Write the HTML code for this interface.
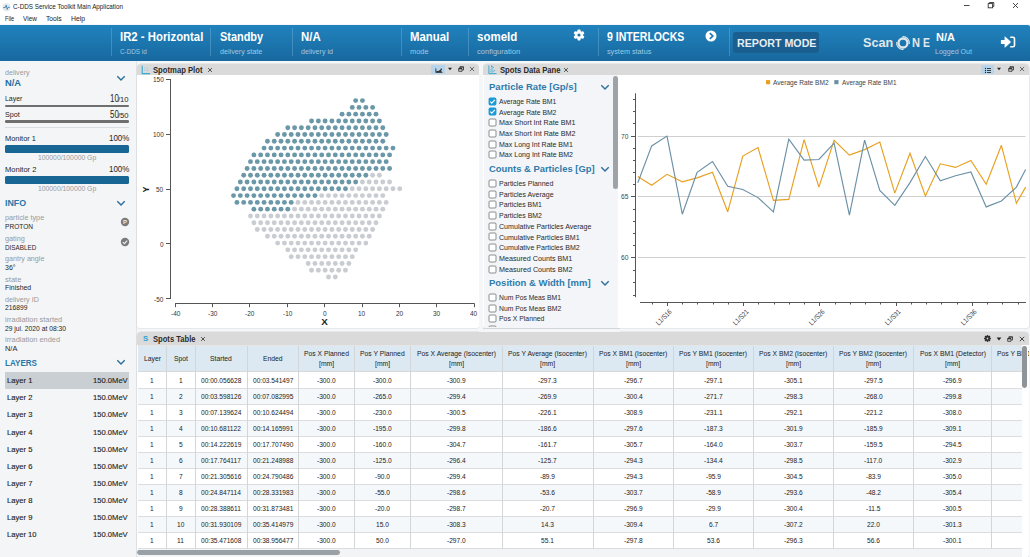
<!DOCTYPE html>
<html><head><meta charset="utf-8"><title>C-DDS Service Toolkit</title>
<style>
html,body{margin:0;padding:0;}
body{width:1030px;height:557px;position:relative;overflow:hidden;background:#f4f6f8;font-family:"Liberation Sans", sans-serif;}
.t{position:absolute;white-space:pre;transform-origin:0 0;z-index:2;}
svg{position:absolute;left:0;top:0;}
</style></head><body>
<div style="position:absolute;left:0.00px;top:0.00px;width:1030.00px;height:24.00px;background:#ffffff;"></div>
<svg width="12" height="12" style="left:1px;top:0.5px" viewBox="0 0 12 12"><circle cx="5.5" cy="6.3" r="4" fill="#e4e8ec"/><path d="M2.2 6.6 L4.2 6.6 L5.2 4.2 L6.2 8.4 L7 6.3 L8.8 6.3" fill="none" stroke="#3a7fb5" stroke-width="0.9"/></svg>
<svg width="1030" height="24" style="left:0;top:0"><g stroke="#333" stroke-width="0.9" fill="none"><line x1="964" y1="5.5" x2="969.5" y2="5.5"/><rect x="988.2" y="3.6" width="4.4" height="4.2"/><path d="M989.4 3.6 V2.5 H993.8 V6.6 H992.6"/><line x1="1013" y1="3" x2="1018" y2="8"/><line x1="1018" y1="3" x2="1013" y2="8"/></g></svg>
<div style="position:absolute;left:0.00px;top:24.50px;width:1029.50px;height:36.10px;background:linear-gradient(#2182bd,#17699f);border-top-right-radius:2px;"></div>
<div style="position:absolute;left:111.30px;top:28.00px;width:1.00px;height:28.00px;background:rgba(140,190,225,0.35);"></div>
<div style="position:absolute;left:210.30px;top:28.00px;width:1.00px;height:28.00px;background:rgba(140,190,225,0.35);"></div>
<div style="position:absolute;left:291.90px;top:28.00px;width:1.00px;height:28.00px;background:rgba(140,190,225,0.35);"></div>
<div style="position:absolute;left:401.20px;top:28.00px;width:1.00px;height:28.00px;background:rgba(140,190,225,0.35);"></div>
<div style="position:absolute;left:468.10px;top:28.00px;width:1.00px;height:28.00px;background:rgba(140,190,225,0.35);"></div>
<div style="position:absolute;left:598.10px;top:28.00px;width:1.00px;height:28.00px;background:rgba(140,190,225,0.35);"></div>
<div style="position:absolute;left:729.20px;top:28.00px;width:1.00px;height:28.00px;background:rgba(140,190,225,0.35);"></div>
<svg width="14" height="14" style="left:572.3px;top:28.1px" viewBox="-7 -7 14 14"><g fill="#fff"><rect x="-1.5" y="-5.5" width="3" height="2.6" rx="0.7" transform="rotate(0)"/><rect x="-1.5" y="-5.5" width="3" height="2.6" rx="0.7" transform="rotate(60)"/><rect x="-1.5" y="-5.5" width="3" height="2.6" rx="0.7" transform="rotate(120)"/><rect x="-1.5" y="-5.5" width="3" height="2.6" rx="0.7" transform="rotate(180)"/><rect x="-1.5" y="-5.5" width="3" height="2.6" rx="0.7" transform="rotate(240)"/><rect x="-1.5" y="-5.5" width="3" height="2.6" rx="0.7" transform="rotate(300)"/><circle r="4.1"/></g><circle r="1.6" fill="#1d77b0"/></svg>
<svg width="12" height="12" style="left:704.6px;top:29.5px" viewBox="0 0 12 12"><circle cx="6" cy="6" r="5.5" fill="#fff"/><path d="M4.8 3.1 L7.8 6 L4.8 8.9" fill="none" stroke="#1d77b0" stroke-width="1.7"/></svg>
<div style="position:absolute;left:733.00px;top:31.80px;width:85.80px;height:21.00px;background:#1a5f8f;border-radius:3px;"></div>
<svg width="18" height="18" style="left:894px;top:34px" viewBox="-9 -9 18 18"><circle cx="0" cy="0" r="4.5" fill="none" stroke="#e2e8ec" stroke-width="2.3"/><path d="M-0.5 -6.4 A6.4 6.4 0 0 1 6.3 1" fill="none" stroke="#e2e8ec" stroke-width="1.1"/><path d="M0.5 6.4 A6.4 6.4 0 0 1 -6.3 -1" fill="none" stroke="#e2e8ec" stroke-width="1.1"/></svg>
<svg width="18" height="14" style="left:1000px;top:35px" viewBox="0 0 18 14"><path d="M0.9 5 H4.6 V1.8 Q4.6 1.3 5.1 1.6 L10.6 6.6 Q10.9 7 10.6 7.4 L5.1 12.4 Q4.6 12.7 4.6 12.2 V9 H0.9 Z" fill="#fff"/><path d="M10.2 2.3 H13 Q14.5 2.3 14.5 3.8 V10.2 Q14.5 11.7 13 11.7 H10.2" fill="none" stroke="#fff" stroke-width="1.6"/></svg>
<div style="position:absolute;left:0.00px;top:60.60px;width:136.00px;height:496.40px;background:#f3f5f7;"></div>
<div style="position:absolute;left:135.50px;top:60.60px;width:1.00px;height:496.40px;background:#e3e5e8;"></div>
<svg width="10" height="7" style="left:116.2px;top:74.5px" viewBox="0 0 10 7"><path d="M1.3 1.3 L5 5 L8.7 1.3" fill="none" stroke="#2a6e9a" stroke-width="1.4"/></svg>
<div style="position:absolute;left:5.00px;top:104.50px;width:124.00px;height:2.50px;background:#6f6f6f;border-radius:1.2px;"></div>
<div style="position:absolute;left:5.00px;top:120.20px;width:124.00px;height:2.60px;background:#6f6f6f;border-radius:1.2px;"></div>
<div style="position:absolute;left:5.00px;top:127.00px;width:124.00px;height:1.00px;background:#d9dce0;"></div>
<div style="position:absolute;left:5.00px;top:144.60px;width:124.00px;height:8.10px;background:#176694;border-radius:1.5px;"></div>
<div style="position:absolute;left:5.00px;top:175.60px;width:124.00px;height:8.10px;background:#176694;border-radius:1.5px;"></div>
<svg width="10" height="7" style="left:116.3px;top:199.5px" viewBox="0 0 10 7"><path d="M1.3 1.3 L5 5 L8.7 1.3" fill="none" stroke="#2a6e9a" stroke-width="1.4"/></svg>
<svg width="10" height="10" style="left:119.9px;top:216.7px" viewBox="0 0 10 10"><circle cx="5" cy="5" r="4.2" fill="#7b7b7b"/><text x="5" y="7.3" font-family="Liberation Sans" font-size="6" font-weight="bold" fill="#e8e8e8" text-anchor="middle">P</text></svg>
<svg width="10" height="10" style="left:119.9px;top:237.1px" viewBox="0 0 10 10"><circle cx="5" cy="5" r="4.2" fill="#7b7b7b"/><path d="M2.8 5.1 L4.4 6.6 L7.2 3.6" fill="none" stroke="#eee" stroke-width="1.2"/></svg>
<svg width="10" height="7" style="left:116.2px;top:359.3px" viewBox="0 0 10 7"><path d="M1.3 1.3 L5 5 L8.7 1.3" fill="none" stroke="#2a6e9a" stroke-width="1.4"/></svg>
<div style="position:absolute;left:5.20px;top:372.30px;width:123.60px;height:16.60px;background:#c9cfd3;"></div>
<div style="position:absolute;left:136.50px;top:60.60px;width:893.50px;height:3.00px;background:#f5f7f9;"></div>
<div style="position:absolute;left:137.00px;top:63.90px;width:341.70px;height:264.30px;background:#ffffff;border-radius:4px 4px 2px 2px;box-shadow:0 0 0 0.5px #d8dadd;overflow:hidden"><div style="position:absolute;left:0;top:0;right:0;height:10.80px;background:#dadada"></div></div>
<div style="position:absolute;left:483.00px;top:63.90px;width:545.50px;height:264.30px;background:#ffffff;border-radius:4px 4px 2px 2px;box-shadow:0 0 0 0.5px #d8dadd;overflow:hidden"><div style="position:absolute;left:0;top:0;right:0;height:10.80px;background:#dadada"></div></div>
<div style="position:absolute;left:137.00px;top:332.20px;width:891.50px;height:224.80px;background:#ffffff;border-radius:4px 4px 2px 2px;box-shadow:0 0 0 0.5px #d8dadd;overflow:hidden"><div style="position:absolute;left:0;top:0;right:0;height:12.50px;background:#dadada"></div></div>
<div style="position:absolute;left:478.70px;top:63.60px;width:4.30px;height:268.60px;background:#f4f6f8;"></div>
<svg width="10" height="10" style="left:140.6px;top:65px" viewBox="0 0 10 10"><path d="M1.2 0.8 V8.6 H9" fill="none" stroke="#39a9d6" stroke-width="1.1"/><path d="M3 3 H4.2 M5.4 3 H6.6 M3 5.2 H4 M5.2 5.2 H7.6" stroke="#8cc6df" stroke-width="0.7"/></svg>
<svg width="8" height="8" style="left:206.20px;top:65.80px" viewBox="-4 -4 8 8"><path d="M-1.9 -1.9 L1.9 1.9 M1.9 -1.9 L-1.9 1.9" stroke="#444" stroke-width="0.9" fill="none"/></svg>
<div style="position:absolute;left:431.10px;top:65.00px;width:13.70px;height:9.00px;background:#b6d4ec;"></div>
<svg width="8" height="6" style="left:446.20px;top:66.40px" viewBox="0 0 8 6"><path d="M2 1.8 H6 L4 4.2 Z" fill="#222"/></svg>
<svg width="8" height="8" style="left:457.40px;top:65.40px" viewBox="0 0 8 8"><g fill="none" stroke="#222" stroke-width="0.75"><path d="M1.7 3.5 H5 V6.3 H1.7 Z"/><path d="M2.9 3.3 V1.8 H6.5 V5 H5.2"/></g><rect x="1.6" y="3.4" width="3.4" height="0.9" fill="#222"/><rect x="2.8" y="1.7" width="3.8" height="0.8" fill="#222"/></svg>
<svg width="8" height="8" style="left:468.40px;top:65.40px" viewBox="-4 -4 8 8"><path d="M-2.1 -2.1 L2.1 2.1 M2.1 -2.1 L-2.1 2.1" stroke="#444" stroke-width="0.75" fill="none"/></svg>
<svg width="10" height="8" style="left:433.5px;top:66px" viewBox="0 0 10 8"><path d="M1.8 2.4 V6.4 H8.4" fill="none" stroke="#333" stroke-width="0.9"/><path d="M2.3 6.2 V4.6 Q4 5.6 5 4.6 Q6 3.6 7.2 3.4 L7.6 6.2 Z" fill="#333"/><circle cx="7.2" cy="3.2" r="0.8" fill="#222"/></svg>
<svg width="1030" height="557" style="left:0;top:0;z-index:1"><line x1="170.5" y1="79" x2="170.5" y2="299" stroke="#555" stroke-width="1"/><line x1="166" y1="79.5" x2="170.5" y2="79.5" stroke="#555" stroke-width="1"/><line x1="166" y1="134.5" x2="170.5" y2="134.5" stroke="#555" stroke-width="1"/><line x1="166" y1="189.5" x2="170.5" y2="189.5" stroke="#555" stroke-width="1"/><line x1="166" y1="243.5" x2="170.5" y2="243.5" stroke="#555" stroke-width="1"/><line x1="166" y1="298.5" x2="170.5" y2="298.5" stroke="#555" stroke-width="1"/><line x1="175" y1="303.5" x2="474.5" y2="303.5" stroke="#555" stroke-width="1"/><line x1="175.5" y1="303.5" x2="175.5" y2="307.2" stroke="#555" stroke-width="1"/><line x1="212.5" y1="303.5" x2="212.5" y2="307.2" stroke="#555" stroke-width="1"/><line x1="249.5" y1="303.5" x2="249.5" y2="307.2" stroke="#555" stroke-width="1"/><line x1="287.5" y1="303.5" x2="287.5" y2="307.2" stroke="#555" stroke-width="1"/><line x1="324.5" y1="303.5" x2="324.5" y2="307.2" stroke="#555" stroke-width="1"/><line x1="362.5" y1="303.5" x2="362.5" y2="307.2" stroke="#555" stroke-width="1"/><line x1="399.5" y1="303.5" x2="399.5" y2="307.2" stroke="#555" stroke-width="1"/><line x1="436.5" y1="303.5" x2="436.5" y2="307.2" stroke="#555" stroke-width="1"/><line x1="474.5" y1="303.5" x2="474.5" y2="307.2" stroke="#555" stroke-width="1"/><circle cx="355.65" cy="100.60" r="2.45" fill="#6b98a8"/><circle cx="362.43" cy="100.60" r="2.45" fill="#6b98a8"/><circle cx="352.26" cy="107.38" r="2.45" fill="#6b98a8"/><circle cx="359.04" cy="107.38" r="2.45" fill="#6b98a8"/><circle cx="365.83" cy="107.38" r="2.45" fill="#6b98a8"/><circle cx="372.61" cy="107.38" r="2.45" fill="#6b98a8"/><circle cx="342.08" cy="114.17" r="2.45" fill="#6b98a8"/><circle cx="348.87" cy="114.17" r="2.45" fill="#6b98a8"/><circle cx="355.65" cy="114.17" r="2.45" fill="#6b98a8"/><circle cx="362.43" cy="114.17" r="2.45" fill="#6b98a8"/><circle cx="369.22" cy="114.17" r="2.45" fill="#6b98a8"/><circle cx="376.00" cy="114.17" r="2.45" fill="#6b98a8"/><circle cx="311.55" cy="120.95" r="2.45" fill="#6b98a8"/><circle cx="318.34" cy="120.95" r="2.45" fill="#6b98a8"/><circle cx="325.12" cy="120.95" r="2.45" fill="#6b98a8"/><circle cx="331.91" cy="120.95" r="2.45" fill="#6b98a8"/><circle cx="338.69" cy="120.95" r="2.45" fill="#6b98a8"/><circle cx="345.47" cy="120.95" r="2.45" fill="#6b98a8"/><circle cx="352.26" cy="120.95" r="2.45" fill="#6b98a8"/><circle cx="359.04" cy="120.95" r="2.45" fill="#6b98a8"/><circle cx="365.83" cy="120.95" r="2.45" fill="#6b98a8"/><circle cx="372.61" cy="120.95" r="2.45" fill="#6b98a8"/><circle cx="379.39" cy="120.95" r="2.45" fill="#6b98a8"/><circle cx="287.81" cy="127.74" r="2.45" fill="#6b98a8"/><circle cx="294.59" cy="127.74" r="2.45" fill="#6b98a8"/><circle cx="301.38" cy="127.74" r="2.45" fill="#6b98a8"/><circle cx="308.16" cy="127.74" r="2.45" fill="#6b98a8"/><circle cx="314.95" cy="127.74" r="2.45" fill="#6b98a8"/><circle cx="321.73" cy="127.74" r="2.45" fill="#6b98a8"/><circle cx="328.51" cy="127.74" r="2.45" fill="#6b98a8"/><circle cx="335.30" cy="127.74" r="2.45" fill="#6b98a8"/><circle cx="342.08" cy="127.74" r="2.45" fill="#6b98a8"/><circle cx="348.87" cy="127.74" r="2.45" fill="#6b98a8"/><circle cx="355.65" cy="127.74" r="2.45" fill="#6b98a8"/><circle cx="362.43" cy="127.74" r="2.45" fill="#6b98a8"/><circle cx="369.22" cy="127.74" r="2.45" fill="#6b98a8"/><circle cx="376.00" cy="127.74" r="2.45" fill="#6b98a8"/><circle cx="382.79" cy="127.74" r="2.45" fill="#6b98a8"/><circle cx="277.63" cy="134.52" r="2.45" fill="#6b98a8"/><circle cx="284.42" cy="134.52" r="2.45" fill="#6b98a8"/><circle cx="291.20" cy="134.52" r="2.45" fill="#6b98a8"/><circle cx="297.99" cy="134.52" r="2.45" fill="#6b98a8"/><circle cx="304.77" cy="134.52" r="2.45" fill="#6b98a8"/><circle cx="311.55" cy="134.52" r="2.45" fill="#6b98a8"/><circle cx="318.34" cy="134.52" r="2.45" fill="#6b98a8"/><circle cx="325.12" cy="134.52" r="2.45" fill="#6b98a8"/><circle cx="331.91" cy="134.52" r="2.45" fill="#6b98a8"/><circle cx="338.69" cy="134.52" r="2.45" fill="#6b98a8"/><circle cx="345.47" cy="134.52" r="2.45" fill="#6b98a8"/><circle cx="352.26" cy="134.52" r="2.45" fill="#6b98a8"/><circle cx="359.04" cy="134.52" r="2.45" fill="#6b98a8"/><circle cx="365.83" cy="134.52" r="2.45" fill="#6b98a8"/><circle cx="372.61" cy="134.52" r="2.45" fill="#6b98a8"/><circle cx="379.39" cy="134.52" r="2.45" fill="#6b98a8"/><circle cx="386.18" cy="134.52" r="2.45" fill="#6b98a8"/><circle cx="267.46" cy="141.31" r="2.45" fill="#6b98a8"/><circle cx="274.24" cy="141.31" r="2.45" fill="#6b98a8"/><circle cx="281.03" cy="141.31" r="2.45" fill="#6b98a8"/><circle cx="287.81" cy="141.31" r="2.45" fill="#6b98a8"/><circle cx="294.59" cy="141.31" r="2.45" fill="#6b98a8"/><circle cx="301.38" cy="141.31" r="2.45" fill="#6b98a8"/><circle cx="308.16" cy="141.31" r="2.45" fill="#6b98a8"/><circle cx="314.95" cy="141.31" r="2.45" fill="#6b98a8"/><circle cx="321.73" cy="141.31" r="2.45" fill="#6b98a8"/><circle cx="328.51" cy="141.31" r="2.45" fill="#6b98a8"/><circle cx="335.30" cy="141.31" r="2.45" fill="#6b98a8"/><circle cx="342.08" cy="141.31" r="2.45" fill="#6b98a8"/><circle cx="348.87" cy="141.31" r="2.45" fill="#6b98a8"/><circle cx="355.65" cy="141.31" r="2.45" fill="#6b98a8"/><circle cx="362.43" cy="141.31" r="2.45" fill="#6b98a8"/><circle cx="369.22" cy="141.31" r="2.45" fill="#6b98a8"/><circle cx="376.00" cy="141.31" r="2.45" fill="#6b98a8"/><circle cx="382.79" cy="141.31" r="2.45" fill="#6b98a8"/><circle cx="264.07" cy="148.09" r="2.45" fill="#6b98a8"/><circle cx="270.85" cy="148.09" r="2.45" fill="#6b98a8"/><circle cx="277.63" cy="148.09" r="2.45" fill="#6b98a8"/><circle cx="284.42" cy="148.09" r="2.45" fill="#6b98a8"/><circle cx="291.20" cy="148.09" r="2.45" fill="#6b98a8"/><circle cx="297.99" cy="148.09" r="2.45" fill="#6b98a8"/><circle cx="304.77" cy="148.09" r="2.45" fill="#6b98a8"/><circle cx="311.55" cy="148.09" r="2.45" fill="#6b98a8"/><circle cx="318.34" cy="148.09" r="2.45" fill="#6b98a8"/><circle cx="325.12" cy="148.09" r="2.45" fill="#6b98a8"/><circle cx="331.91" cy="148.09" r="2.45" fill="#6b98a8"/><circle cx="338.69" cy="148.09" r="2.45" fill="#6b98a8"/><circle cx="345.47" cy="148.09" r="2.45" fill="#6b98a8"/><circle cx="352.26" cy="148.09" r="2.45" fill="#6b98a8"/><circle cx="359.04" cy="148.09" r="2.45" fill="#6b98a8"/><circle cx="365.83" cy="148.09" r="2.45" fill="#6b98a8"/><circle cx="372.61" cy="148.09" r="2.45" fill="#6b98a8"/><circle cx="379.39" cy="148.09" r="2.45" fill="#6b98a8"/><circle cx="386.18" cy="148.09" r="2.45" fill="#6b98a8"/><circle cx="392.96" cy="148.09" r="2.45" fill="#6b98a8"/><circle cx="253.89" cy="154.88" r="2.45" fill="#6b98a8"/><circle cx="260.67" cy="154.88" r="2.45" fill="#6b98a8"/><circle cx="267.46" cy="154.88" r="2.45" fill="#6b98a8"/><circle cx="274.24" cy="154.88" r="2.45" fill="#6b98a8"/><circle cx="281.03" cy="154.88" r="2.45" fill="#6b98a8"/><circle cx="287.81" cy="154.88" r="2.45" fill="#6b98a8"/><circle cx="294.59" cy="154.88" r="2.45" fill="#6b98a8"/><circle cx="301.38" cy="154.88" r="2.45" fill="#6b98a8"/><circle cx="308.16" cy="154.88" r="2.45" fill="#6b98a8"/><circle cx="314.95" cy="154.88" r="2.45" fill="#6b98a8"/><circle cx="321.73" cy="154.88" r="2.45" fill="#6b98a8"/><circle cx="328.51" cy="154.88" r="2.45" fill="#6b98a8"/><circle cx="335.30" cy="154.88" r="2.45" fill="#6b98a8"/><circle cx="342.08" cy="154.88" r="2.45" fill="#6b98a8"/><circle cx="348.87" cy="154.88" r="2.45" fill="#6b98a8"/><circle cx="355.65" cy="154.88" r="2.45" fill="#6b98a8"/><circle cx="362.43" cy="154.88" r="2.45" fill="#6b98a8"/><circle cx="369.22" cy="154.88" r="2.45" fill="#6b98a8"/><circle cx="376.00" cy="154.88" r="2.45" fill="#6b98a8"/><circle cx="382.79" cy="154.88" r="2.45" fill="#6b98a8"/><circle cx="389.57" cy="154.88" r="2.45" fill="#6b98a8"/><circle cx="250.50" cy="161.66" r="2.45" fill="#6b98a8"/><circle cx="257.28" cy="161.66" r="2.45" fill="#6b98a8"/><circle cx="264.07" cy="161.66" r="2.45" fill="#6b98a8"/><circle cx="270.85" cy="161.66" r="2.45" fill="#6b98a8"/><circle cx="277.63" cy="161.66" r="2.45" fill="#6b98a8"/><circle cx="284.42" cy="161.66" r="2.45" fill="#6b98a8"/><circle cx="291.20" cy="161.66" r="2.45" fill="#6b98a8"/><circle cx="297.99" cy="161.66" r="2.45" fill="#6b98a8"/><circle cx="304.77" cy="161.66" r="2.45" fill="#6b98a8"/><circle cx="311.55" cy="161.66" r="2.45" fill="#6b98a8"/><circle cx="318.34" cy="161.66" r="2.45" fill="#6b98a8"/><circle cx="325.12" cy="161.66" r="2.45" fill="#6b98a8"/><circle cx="331.91" cy="161.66" r="2.45" fill="#6b98a8"/><circle cx="338.69" cy="161.66" r="2.45" fill="#6b98a8"/><circle cx="345.47" cy="161.66" r="2.45" fill="#6b98a8"/><circle cx="352.26" cy="161.66" r="2.45" fill="#6b98a8"/><circle cx="359.04" cy="161.66" r="2.45" fill="#6b98a8"/><circle cx="365.83" cy="161.66" r="2.45" fill="#6b98a8"/><circle cx="372.61" cy="161.66" r="2.45" fill="#6b98a8"/><circle cx="379.39" cy="161.66" r="2.45" fill="#6b98a8"/><circle cx="386.18" cy="161.66" r="2.45" fill="#6b98a8"/><circle cx="247.11" cy="168.45" r="2.45" fill="#6b98a8"/><circle cx="253.89" cy="168.45" r="2.45" fill="#6b98a8"/><circle cx="260.67" cy="168.45" r="2.45" fill="#6b98a8"/><circle cx="267.46" cy="168.45" r="2.45" fill="#6b98a8"/><circle cx="274.24" cy="168.45" r="2.45" fill="#6b98a8"/><circle cx="281.03" cy="168.45" r="2.45" fill="#6b98a8"/><circle cx="287.81" cy="168.45" r="2.45" fill="#6b98a8"/><circle cx="294.59" cy="168.45" r="2.45" fill="#6b98a8"/><circle cx="301.38" cy="168.45" r="2.45" fill="#6b98a8"/><circle cx="308.16" cy="168.45" r="2.45" fill="#6b98a8"/><circle cx="314.95" cy="168.45" r="2.45" fill="#6b98a8"/><circle cx="321.73" cy="168.45" r="2.45" fill="#6b98a8"/><circle cx="328.51" cy="168.45" r="2.45" fill="#6b98a8"/><circle cx="335.30" cy="168.45" r="2.45" fill="#6b98a8"/><circle cx="342.08" cy="168.45" r="2.45" fill="#6b98a8"/><circle cx="348.87" cy="168.45" r="2.45" fill="#6b98a8"/><circle cx="355.65" cy="168.45" r="2.45" fill="#6b98a8"/><circle cx="362.43" cy="168.45" r="2.45" fill="#6b98a8"/><circle cx="369.22" cy="168.45" r="2.45" fill="#6b98a8"/><circle cx="376.00" cy="168.45" r="2.45" fill="#6b98a8"/><circle cx="382.79" cy="168.45" r="2.45" fill="#6b98a8"/><circle cx="389.57" cy="168.45" r="2.45" fill="#6b98a8"/><circle cx="243.71" cy="175.24" r="2.45" fill="#6b98a8"/><circle cx="250.50" cy="175.24" r="2.45" fill="#6b98a8"/><circle cx="257.28" cy="175.24" r="2.45" fill="#6b98a8"/><circle cx="264.07" cy="175.24" r="2.45" fill="#6b98a8"/><circle cx="270.85" cy="175.24" r="2.45" fill="#6b98a8"/><circle cx="277.63" cy="175.24" r="2.45" fill="#6b98a8"/><circle cx="284.42" cy="175.24" r="2.45" fill="#6b98a8"/><circle cx="291.20" cy="175.24" r="2.45" fill="#6b98a8"/><circle cx="297.99" cy="175.24" r="2.45" fill="#6b98a8"/><circle cx="304.77" cy="175.24" r="2.45" fill="#6b98a8"/><circle cx="311.55" cy="175.24" r="2.45" fill="#6b98a8"/><circle cx="318.34" cy="175.24" r="2.45" fill="#6b98a8"/><circle cx="325.12" cy="175.24" r="2.45" fill="#6b98a8"/><circle cx="331.91" cy="175.24" r="2.45" fill="#6b98a8"/><circle cx="338.69" cy="175.24" r="2.45" fill="#6b98a8"/><circle cx="345.47" cy="175.24" r="2.45" fill="#6b98a8"/><circle cx="352.26" cy="175.24" r="2.45" fill="#6b98a8"/><circle cx="359.04" cy="175.24" r="2.45" fill="#6b98a8"/><circle cx="365.83" cy="175.24" r="2.45" fill="#6b98a8"/><circle cx="372.61" cy="175.24" r="2.45" fill="#c9ccd1"/><circle cx="379.39" cy="175.24" r="2.45" fill="#c9ccd1"/><circle cx="240.32" cy="182.02" r="2.45" fill="#6b98a8"/><circle cx="247.11" cy="182.02" r="2.45" fill="#6b98a8"/><circle cx="253.89" cy="182.02" r="2.45" fill="#6b98a8"/><circle cx="260.67" cy="182.02" r="2.45" fill="#6b98a8"/><circle cx="267.46" cy="182.02" r="2.45" fill="#6b98a8"/><circle cx="274.24" cy="182.02" r="2.45" fill="#6b98a8"/><circle cx="281.03" cy="182.02" r="2.45" fill="#6b98a8"/><circle cx="287.81" cy="182.02" r="2.45" fill="#6b98a8"/><circle cx="294.59" cy="182.02" r="2.45" fill="#6b98a8"/><circle cx="301.38" cy="182.02" r="2.45" fill="#6b98a8"/><circle cx="308.16" cy="182.02" r="2.45" fill="#6b98a8"/><circle cx="314.95" cy="182.02" r="2.45" fill="#6b98a8"/><circle cx="321.73" cy="182.02" r="2.45" fill="#6b98a8"/><circle cx="328.51" cy="182.02" r="2.45" fill="#6b98a8"/><circle cx="335.30" cy="182.02" r="2.45" fill="#6b98a8"/><circle cx="342.08" cy="182.02" r="2.45" fill="#6b98a8"/><circle cx="348.87" cy="182.02" r="2.45" fill="#6b98a8"/><circle cx="355.65" cy="182.02" r="2.45" fill="#6b98a8"/><circle cx="362.43" cy="182.02" r="2.45" fill="#c9ccd1"/><circle cx="369.22" cy="182.02" r="2.45" fill="#c9ccd1"/><circle cx="376.00" cy="182.02" r="2.45" fill="#c9ccd1"/><circle cx="382.79" cy="182.02" r="2.45" fill="#c9ccd1"/><circle cx="389.57" cy="182.02" r="2.45" fill="#c9ccd1"/><circle cx="236.93" cy="188.81" r="2.45" fill="#6b98a8"/><circle cx="243.71" cy="188.81" r="2.45" fill="#6b98a8"/><circle cx="250.50" cy="188.81" r="2.45" fill="#6b98a8"/><circle cx="257.28" cy="188.81" r="2.45" fill="#6b98a8"/><circle cx="264.07" cy="188.81" r="2.45" fill="#6b98a8"/><circle cx="270.85" cy="188.81" r="2.45" fill="#6b98a8"/><circle cx="277.63" cy="188.81" r="2.45" fill="#6b98a8"/><circle cx="284.42" cy="188.81" r="2.45" fill="#6b98a8"/><circle cx="291.20" cy="188.81" r="2.45" fill="#6b98a8"/><circle cx="297.99" cy="188.81" r="2.45" fill="#6b98a8"/><circle cx="304.77" cy="188.81" r="2.45" fill="#6b98a8"/><circle cx="311.55" cy="188.81" r="2.45" fill="#6b98a8"/><circle cx="318.34" cy="188.81" r="2.45" fill="#6b98a8"/><circle cx="325.12" cy="188.81" r="2.45" fill="#6b98a8"/><circle cx="331.91" cy="188.81" r="2.45" fill="#6b98a8"/><circle cx="338.69" cy="188.81" r="2.45" fill="#6b98a8"/><circle cx="345.47" cy="188.81" r="2.45" fill="#6b98a8"/><circle cx="352.26" cy="188.81" r="2.45" fill="#c9ccd1"/><circle cx="359.04" cy="188.81" r="2.45" fill="#c9ccd1"/><circle cx="365.83" cy="188.81" r="2.45" fill="#c9ccd1"/><circle cx="372.61" cy="188.81" r="2.45" fill="#c9ccd1"/><circle cx="379.39" cy="188.81" r="2.45" fill="#c9ccd1"/><circle cx="386.18" cy="188.81" r="2.45" fill="#c9ccd1"/><circle cx="392.96" cy="188.81" r="2.45" fill="#c9ccd1"/><circle cx="399.75" cy="188.81" r="2.45" fill="#c9ccd1"/><circle cx="233.54" cy="195.59" r="2.45" fill="#6b98a8"/><circle cx="240.32" cy="195.59" r="2.45" fill="#6b98a8"/><circle cx="247.11" cy="195.59" r="2.45" fill="#6b98a8"/><circle cx="253.89" cy="195.59" r="2.45" fill="#6b98a8"/><circle cx="260.67" cy="195.59" r="2.45" fill="#6b98a8"/><circle cx="267.46" cy="195.59" r="2.45" fill="#6b98a8"/><circle cx="274.24" cy="195.59" r="2.45" fill="#6b98a8"/><circle cx="281.03" cy="195.59" r="2.45" fill="#6b98a8"/><circle cx="287.81" cy="195.59" r="2.45" fill="#6b98a8"/><circle cx="294.59" cy="195.59" r="2.45" fill="#6b98a8"/><circle cx="301.38" cy="195.59" r="2.45" fill="#6b98a8"/><circle cx="308.16" cy="195.59" r="2.45" fill="#6b98a8"/><circle cx="314.95" cy="195.59" r="2.45" fill="#6b98a8"/><circle cx="321.73" cy="195.59" r="2.45" fill="#c9ccd1"/><circle cx="328.51" cy="195.59" r="2.45" fill="#c9ccd1"/><circle cx="335.30" cy="195.59" r="2.45" fill="#c9ccd1"/><circle cx="342.08" cy="195.59" r="2.45" fill="#c9ccd1"/><circle cx="348.87" cy="195.59" r="2.45" fill="#c9ccd1"/><circle cx="355.65" cy="195.59" r="2.45" fill="#c9ccd1"/><circle cx="362.43" cy="195.59" r="2.45" fill="#c9ccd1"/><circle cx="369.22" cy="195.59" r="2.45" fill="#c9ccd1"/><circle cx="376.00" cy="195.59" r="2.45" fill="#c9ccd1"/><circle cx="382.79" cy="195.59" r="2.45" fill="#c9ccd1"/><circle cx="236.93" cy="202.38" r="2.45" fill="#6b98a8"/><circle cx="243.71" cy="202.38" r="2.45" fill="#6b98a8"/><circle cx="250.50" cy="202.38" r="2.45" fill="#6b98a8"/><circle cx="257.28" cy="202.38" r="2.45" fill="#6b98a8"/><circle cx="264.07" cy="202.38" r="2.45" fill="#6b98a8"/><circle cx="270.85" cy="202.38" r="2.45" fill="#6b98a8"/><circle cx="277.63" cy="202.38" r="2.45" fill="#6b98a8"/><circle cx="284.42" cy="202.38" r="2.45" fill="#6b98a8"/><circle cx="291.20" cy="202.38" r="2.45" fill="#6b98a8"/><circle cx="297.99" cy="202.38" r="2.45" fill="#c9ccd1"/><circle cx="304.77" cy="202.38" r="2.45" fill="#c9ccd1"/><circle cx="311.55" cy="202.38" r="2.45" fill="#c9ccd1"/><circle cx="318.34" cy="202.38" r="2.45" fill="#c9ccd1"/><circle cx="325.12" cy="202.38" r="2.45" fill="#c9ccd1"/><circle cx="331.91" cy="202.38" r="2.45" fill="#c9ccd1"/><circle cx="338.69" cy="202.38" r="2.45" fill="#c9ccd1"/><circle cx="345.47" cy="202.38" r="2.45" fill="#c9ccd1"/><circle cx="352.26" cy="202.38" r="2.45" fill="#c9ccd1"/><circle cx="359.04" cy="202.38" r="2.45" fill="#c9ccd1"/><circle cx="365.83" cy="202.38" r="2.45" fill="#c9ccd1"/><circle cx="372.61" cy="202.38" r="2.45" fill="#c9ccd1"/><circle cx="379.39" cy="202.38" r="2.45" fill="#c9ccd1"/><circle cx="386.18" cy="202.38" r="2.45" fill="#c9ccd1"/><circle cx="253.89" cy="209.16" r="2.45" fill="#6b98a8"/><circle cx="260.67" cy="209.16" r="2.45" fill="#6b98a8"/><circle cx="267.46" cy="209.16" r="2.45" fill="#6b98a8"/><circle cx="274.24" cy="209.16" r="2.45" fill="#6b98a8"/><circle cx="281.03" cy="209.16" r="2.45" fill="#6b98a8"/><circle cx="287.81" cy="209.16" r="2.45" fill="#6b98a8"/><circle cx="294.59" cy="209.16" r="2.45" fill="#c9ccd1"/><circle cx="301.38" cy="209.16" r="2.45" fill="#c9ccd1"/><circle cx="308.16" cy="209.16" r="2.45" fill="#c9ccd1"/><circle cx="314.95" cy="209.16" r="2.45" fill="#c9ccd1"/><circle cx="321.73" cy="209.16" r="2.45" fill="#c9ccd1"/><circle cx="328.51" cy="209.16" r="2.45" fill="#c9ccd1"/><circle cx="335.30" cy="209.16" r="2.45" fill="#c9ccd1"/><circle cx="342.08" cy="209.16" r="2.45" fill="#c9ccd1"/><circle cx="348.87" cy="209.16" r="2.45" fill="#c9ccd1"/><circle cx="355.65" cy="209.16" r="2.45" fill="#c9ccd1"/><circle cx="362.43" cy="209.16" r="2.45" fill="#c9ccd1"/><circle cx="369.22" cy="209.16" r="2.45" fill="#c9ccd1"/><circle cx="376.00" cy="209.16" r="2.45" fill="#c9ccd1"/><circle cx="382.79" cy="209.16" r="2.45" fill="#c9ccd1"/><circle cx="250.50" cy="215.94" r="2.45" fill="#c9ccd1"/><circle cx="257.28" cy="215.94" r="2.45" fill="#c9ccd1"/><circle cx="264.07" cy="215.94" r="2.45" fill="#c9ccd1"/><circle cx="270.85" cy="215.94" r="2.45" fill="#c9ccd1"/><circle cx="277.63" cy="215.94" r="2.45" fill="#c9ccd1"/><circle cx="284.42" cy="215.94" r="2.45" fill="#c9ccd1"/><circle cx="291.20" cy="215.94" r="2.45" fill="#c9ccd1"/><circle cx="297.99" cy="215.94" r="2.45" fill="#c9ccd1"/><circle cx="304.77" cy="215.94" r="2.45" fill="#c9ccd1"/><circle cx="311.55" cy="215.94" r="2.45" fill="#c9ccd1"/><circle cx="318.34" cy="215.94" r="2.45" fill="#c9ccd1"/><circle cx="325.12" cy="215.94" r="2.45" fill="#c9ccd1"/><circle cx="331.91" cy="215.94" r="2.45" fill="#c9ccd1"/><circle cx="338.69" cy="215.94" r="2.45" fill="#c9ccd1"/><circle cx="345.47" cy="215.94" r="2.45" fill="#c9ccd1"/><circle cx="352.26" cy="215.94" r="2.45" fill="#c9ccd1"/><circle cx="359.04" cy="215.94" r="2.45" fill="#c9ccd1"/><circle cx="365.83" cy="215.94" r="2.45" fill="#c9ccd1"/><circle cx="372.61" cy="215.94" r="2.45" fill="#c9ccd1"/><circle cx="379.39" cy="215.94" r="2.45" fill="#c9ccd1"/><circle cx="253.89" cy="222.73" r="2.45" fill="#c9ccd1"/><circle cx="260.67" cy="222.73" r="2.45" fill="#c9ccd1"/><circle cx="267.46" cy="222.73" r="2.45" fill="#c9ccd1"/><circle cx="274.24" cy="222.73" r="2.45" fill="#c9ccd1"/><circle cx="281.03" cy="222.73" r="2.45" fill="#c9ccd1"/><circle cx="287.81" cy="222.73" r="2.45" fill="#c9ccd1"/><circle cx="294.59" cy="222.73" r="2.45" fill="#c9ccd1"/><circle cx="301.38" cy="222.73" r="2.45" fill="#c9ccd1"/><circle cx="308.16" cy="222.73" r="2.45" fill="#c9ccd1"/><circle cx="314.95" cy="222.73" r="2.45" fill="#c9ccd1"/><circle cx="321.73" cy="222.73" r="2.45" fill="#c9ccd1"/><circle cx="328.51" cy="222.73" r="2.45" fill="#c9ccd1"/><circle cx="335.30" cy="222.73" r="2.45" fill="#c9ccd1"/><circle cx="342.08" cy="222.73" r="2.45" fill="#c9ccd1"/><circle cx="348.87" cy="222.73" r="2.45" fill="#c9ccd1"/><circle cx="355.65" cy="222.73" r="2.45" fill="#c9ccd1"/><circle cx="362.43" cy="222.73" r="2.45" fill="#c9ccd1"/><circle cx="369.22" cy="222.73" r="2.45" fill="#c9ccd1"/><circle cx="376.00" cy="222.73" r="2.45" fill="#c9ccd1"/><circle cx="257.28" cy="229.51" r="2.45" fill="#c9ccd1"/><circle cx="264.07" cy="229.51" r="2.45" fill="#c9ccd1"/><circle cx="270.85" cy="229.51" r="2.45" fill="#c9ccd1"/><circle cx="277.63" cy="229.51" r="2.45" fill="#c9ccd1"/><circle cx="284.42" cy="229.51" r="2.45" fill="#c9ccd1"/><circle cx="291.20" cy="229.51" r="2.45" fill="#c9ccd1"/><circle cx="297.99" cy="229.51" r="2.45" fill="#c9ccd1"/><circle cx="304.77" cy="229.51" r="2.45" fill="#c9ccd1"/><circle cx="311.55" cy="229.51" r="2.45" fill="#c9ccd1"/><circle cx="318.34" cy="229.51" r="2.45" fill="#c9ccd1"/><circle cx="325.12" cy="229.51" r="2.45" fill="#c9ccd1"/><circle cx="331.91" cy="229.51" r="2.45" fill="#c9ccd1"/><circle cx="338.69" cy="229.51" r="2.45" fill="#c9ccd1"/><circle cx="345.47" cy="229.51" r="2.45" fill="#c9ccd1"/><circle cx="352.26" cy="229.51" r="2.45" fill="#c9ccd1"/><circle cx="359.04" cy="229.51" r="2.45" fill="#c9ccd1"/><circle cx="365.83" cy="229.51" r="2.45" fill="#c9ccd1"/><circle cx="372.61" cy="229.51" r="2.45" fill="#c9ccd1"/><circle cx="267.46" cy="236.30" r="2.45" fill="#c9ccd1"/><circle cx="274.24" cy="236.30" r="2.45" fill="#c9ccd1"/><circle cx="281.03" cy="236.30" r="2.45" fill="#c9ccd1"/><circle cx="287.81" cy="236.30" r="2.45" fill="#c9ccd1"/><circle cx="294.59" cy="236.30" r="2.45" fill="#c9ccd1"/><circle cx="301.38" cy="236.30" r="2.45" fill="#c9ccd1"/><circle cx="308.16" cy="236.30" r="2.45" fill="#c9ccd1"/><circle cx="314.95" cy="236.30" r="2.45" fill="#c9ccd1"/><circle cx="321.73" cy="236.30" r="2.45" fill="#c9ccd1"/><circle cx="328.51" cy="236.30" r="2.45" fill="#c9ccd1"/><circle cx="335.30" cy="236.30" r="2.45" fill="#c9ccd1"/><circle cx="342.08" cy="236.30" r="2.45" fill="#c9ccd1"/><circle cx="348.87" cy="236.30" r="2.45" fill="#c9ccd1"/><circle cx="355.65" cy="236.30" r="2.45" fill="#c9ccd1"/><circle cx="362.43" cy="236.30" r="2.45" fill="#c9ccd1"/><circle cx="369.22" cy="236.30" r="2.45" fill="#c9ccd1"/><circle cx="277.63" cy="243.09" r="2.45" fill="#c9ccd1"/><circle cx="284.42" cy="243.09" r="2.45" fill="#c9ccd1"/><circle cx="291.20" cy="243.09" r="2.45" fill="#c9ccd1"/><circle cx="297.99" cy="243.09" r="2.45" fill="#c9ccd1"/><circle cx="304.77" cy="243.09" r="2.45" fill="#c9ccd1"/><circle cx="311.55" cy="243.09" r="2.45" fill="#c9ccd1"/><circle cx="318.34" cy="243.09" r="2.45" fill="#c9ccd1"/><circle cx="325.12" cy="243.09" r="2.45" fill="#c9ccd1"/><circle cx="331.91" cy="243.09" r="2.45" fill="#c9ccd1"/><circle cx="338.69" cy="243.09" r="2.45" fill="#c9ccd1"/><circle cx="345.47" cy="243.09" r="2.45" fill="#c9ccd1"/><circle cx="352.26" cy="243.09" r="2.45" fill="#c9ccd1"/><circle cx="359.04" cy="243.09" r="2.45" fill="#c9ccd1"/><circle cx="365.83" cy="243.09" r="2.45" fill="#c9ccd1"/><circle cx="287.81" cy="249.87" r="2.45" fill="#c9ccd1"/><circle cx="294.59" cy="249.87" r="2.45" fill="#c9ccd1"/><circle cx="301.38" cy="249.87" r="2.45" fill="#c9ccd1"/><circle cx="308.16" cy="249.87" r="2.45" fill="#c9ccd1"/><circle cx="314.95" cy="249.87" r="2.45" fill="#c9ccd1"/><circle cx="321.73" cy="249.87" r="2.45" fill="#c9ccd1"/><circle cx="328.51" cy="249.87" r="2.45" fill="#c9ccd1"/><circle cx="335.30" cy="249.87" r="2.45" fill="#c9ccd1"/><circle cx="342.08" cy="249.87" r="2.45" fill="#c9ccd1"/><circle cx="348.87" cy="249.87" r="2.45" fill="#c9ccd1"/><circle cx="355.65" cy="249.87" r="2.45" fill="#c9ccd1"/><circle cx="291.20" cy="256.65" r="2.45" fill="#c9ccd1"/><circle cx="297.99" cy="256.65" r="2.45" fill="#c9ccd1"/><circle cx="304.77" cy="256.65" r="2.45" fill="#c9ccd1"/><circle cx="311.55" cy="256.65" r="2.45" fill="#c9ccd1"/><circle cx="318.34" cy="256.65" r="2.45" fill="#c9ccd1"/><circle cx="325.12" cy="256.65" r="2.45" fill="#c9ccd1"/><circle cx="331.91" cy="256.65" r="2.45" fill="#c9ccd1"/><circle cx="338.69" cy="256.65" r="2.45" fill="#c9ccd1"/><circle cx="345.47" cy="256.65" r="2.45" fill="#c9ccd1"/><circle cx="352.26" cy="256.65" r="2.45" fill="#c9ccd1"/><circle cx="308.16" cy="263.44" r="2.45" fill="#c9ccd1"/><circle cx="314.95" cy="263.44" r="2.45" fill="#c9ccd1"/><circle cx="321.73" cy="263.44" r="2.45" fill="#c9ccd1"/><circle cx="328.51" cy="263.44" r="2.45" fill="#c9ccd1"/><circle cx="335.30" cy="263.44" r="2.45" fill="#c9ccd1"/><circle cx="342.08" cy="263.44" r="2.45" fill="#c9ccd1"/><circle cx="348.87" cy="263.44" r="2.45" fill="#c9ccd1"/><circle cx="311.55" cy="270.23" r="2.45" fill="#c9ccd1"/><circle cx="318.34" cy="270.23" r="2.45" fill="#c9ccd1"/><circle cx="325.12" cy="270.23" r="2.45" fill="#c9ccd1"/><circle cx="331.91" cy="270.23" r="2.45" fill="#c9ccd1"/><circle cx="338.69" cy="270.23" r="2.45" fill="#c9ccd1"/><circle cx="345.47" cy="270.23" r="2.45" fill="#c9ccd1"/><circle cx="328.51" cy="277.01" r="2.45" fill="#c9ccd1"/><circle cx="335.30" cy="277.01" r="2.45" fill="#c9ccd1"/></svg>
<div class="t" style="left:141.5px;top:184.5px;font-size:9px;line-height:9px;font-weight:bold;color:#1a1a1a;transform:rotate(-90deg);transform-origin:50% 50%;width:8px;text-align:center">Y</div>
<svg width="9" height="9.9" style="left:487.6px;top:65.2px" viewBox="0 0 10 11"><path d="M1 0.6 V9.6 H9.4" fill="none" stroke="#39a9d6" stroke-width="1.1"/><path d="M2.6 8 L5.4 5 M2.6 5.6 L6.6 2.2 M4 8.4 L8 5.6" stroke="#39a9d6" stroke-width="0.9"/><circle cx="4.2" cy="1.6" r="1" fill="#39a9d6"/></svg>
<svg width="8" height="8" style="left:562.30px;top:65.80px" viewBox="-4 -4 8 8"><path d="M-1.9 -1.9 L1.9 1.9 M1.9 -1.9 L-1.9 1.9" stroke="#444" stroke-width="0.9" fill="none"/></svg>
<div style="position:absolute;left:981.00px;top:65.00px;width:13.00px;height:9.00px;background:#b6d4ec;"></div>
<svg width="8" height="6" style="left:995.40px;top:66.40px" viewBox="0 0 8 6"><path d="M2 1.8 H6 L4 4.2 Z" fill="#222"/></svg>
<svg width="8" height="8" style="left:1006.50px;top:65.40px" viewBox="0 0 8 8"><g fill="none" stroke="#222" stroke-width="0.75"><path d="M1.7 3.5 H5 V6.3 H1.7 Z"/><path d="M2.9 3.3 V1.8 H6.5 V5 H5.2"/></g><rect x="1.6" y="3.4" width="3.4" height="0.9" fill="#222"/><rect x="2.8" y="1.7" width="3.8" height="0.8" fill="#222"/></svg>
<svg width="8" height="8" style="left:1017.80px;top:65.40px" viewBox="-4 -4 8 8"><path d="M-2.1 -2.1 L2.1 2.1 M2.1 -2.1 L-2.1 2.1" stroke="#444" stroke-width="0.75" fill="none"/></svg>
<svg width="10" height="8" style="left:983px;top:66px" viewBox="0 0 10 8"><g fill="#222"><circle cx="2.5" cy="2.4" r="0.65"/><circle cx="2.5" cy="4.5" r="0.65"/><circle cx="2.5" cy="6.4" r="0.65"/><rect x="4" y="2" width="4" height="0.85"/><rect x="4" y="4.05" width="4" height="0.85"/><rect x="4" y="6" width="4" height="0.85"/></g></svg>
<div style="position:absolute;left:483.60px;top:74.60px;width:134.40px;height:253.60px;background:#f3f5f8;"></div>
<div style="position:absolute;left:612.60px;top:76.30px;width:5.40px;height:112.70px;background:#9ea3a8;border-radius:2.7px;"></div>
<svg width="10" height="7" style="left:599.8px;top:83.6px" viewBox="0 0 10 7"><path d="M1.3 1.3 L5 5 L8.7 1.3" fill="none" stroke="#2a6e9a" stroke-width="1.4"/></svg>
<svg width="9" height="9" style="left:487.6px;top:96.80px" viewBox="0 0 9 9"><rect x="0.6" y="0.6" width="7.8" height="7.8" rx="1.6" fill="#1b9ad5"/><path d="M2.3 4.6 L3.8 6.1 L6.8 2.9" fill="none" stroke="#fff" stroke-width="1.1"/></svg>
<svg width="9" height="9" style="left:487.6px;top:107.48px" viewBox="0 0 9 9"><rect x="0.6" y="0.6" width="7.8" height="7.8" rx="1.6" fill="#1b9ad5"/><path d="M2.3 4.6 L3.8 6.1 L6.8 2.9" fill="none" stroke="#fff" stroke-width="1.1"/></svg>
<svg width="9" height="9" style="left:487.6px;top:118.16px" viewBox="0 0 9 9"><rect x="1" y="1" width="7" height="7" rx="1" fill="#fff" stroke="#6a6a6a" stroke-width="0.75"/></svg>
<svg width="9" height="9" style="left:487.6px;top:128.84px" viewBox="0 0 9 9"><rect x="1" y="1" width="7" height="7" rx="1" fill="#fff" stroke="#6a6a6a" stroke-width="0.75"/></svg>
<svg width="9" height="9" style="left:487.6px;top:139.52px" viewBox="0 0 9 9"><rect x="1" y="1" width="7" height="7" rx="1" fill="#fff" stroke="#6a6a6a" stroke-width="0.75"/></svg>
<svg width="9" height="9" style="left:487.6px;top:150.20px" viewBox="0 0 9 9"><rect x="1" y="1" width="7" height="7" rx="1" fill="#fff" stroke="#6a6a6a" stroke-width="0.75"/></svg>
<svg width="10" height="7" style="left:599.8px;top:165.9px" viewBox="0 0 10 7"><path d="M1.3 1.3 L5 5 L8.7 1.3" fill="none" stroke="#2a6e9a" stroke-width="1.4"/></svg>
<svg width="9" height="9" style="left:487.6px;top:178.90px" viewBox="0 0 9 9"><rect x="1" y="1" width="7" height="7" rx="1" fill="#fff" stroke="#6a6a6a" stroke-width="0.75"/></svg>
<svg width="9" height="9" style="left:487.6px;top:189.60px" viewBox="0 0 9 9"><rect x="1" y="1" width="7" height="7" rx="1" fill="#fff" stroke="#6a6a6a" stroke-width="0.75"/></svg>
<svg width="9" height="9" style="left:487.6px;top:200.30px" viewBox="0 0 9 9"><rect x="1" y="1" width="7" height="7" rx="1" fill="#fff" stroke="#6a6a6a" stroke-width="0.75"/></svg>
<svg width="9" height="9" style="left:487.6px;top:211.00px" viewBox="0 0 9 9"><rect x="1" y="1" width="7" height="7" rx="1" fill="#fff" stroke="#6a6a6a" stroke-width="0.75"/></svg>
<svg width="9" height="9" style="left:487.6px;top:221.70px" viewBox="0 0 9 9"><rect x="1" y="1" width="7" height="7" rx="1" fill="#fff" stroke="#6a6a6a" stroke-width="0.75"/></svg>
<svg width="9" height="9" style="left:487.6px;top:232.40px" viewBox="0 0 9 9"><rect x="1" y="1" width="7" height="7" rx="1" fill="#fff" stroke="#6a6a6a" stroke-width="0.75"/></svg>
<svg width="9" height="9" style="left:487.6px;top:243.10px" viewBox="0 0 9 9"><rect x="1" y="1" width="7" height="7" rx="1" fill="#fff" stroke="#6a6a6a" stroke-width="0.75"/></svg>
<svg width="9" height="9" style="left:487.6px;top:253.80px" viewBox="0 0 9 9"><rect x="1" y="1" width="7" height="7" rx="1" fill="#fff" stroke="#6a6a6a" stroke-width="0.75"/></svg>
<svg width="9" height="9" style="left:487.6px;top:264.50px" viewBox="0 0 9 9"><rect x="1" y="1" width="7" height="7" rx="1" fill="#fff" stroke="#6a6a6a" stroke-width="0.75"/></svg>
<svg width="10" height="7" style="left:599.8px;top:279.9px" viewBox="0 0 10 7"><path d="M1.3 1.3 L5 5 L8.7 1.3" fill="none" stroke="#2a6e9a" stroke-width="1.4"/></svg>
<svg width="9" height="9" style="left:487.6px;top:292.90px" viewBox="0 0 9 9"><rect x="1" y="1" width="7" height="7" rx="1" fill="#fff" stroke="#6a6a6a" stroke-width="0.75"/></svg>
<svg width="9" height="9" style="left:487.6px;top:303.58px" viewBox="0 0 9 9"><rect x="1" y="1" width="7" height="7" rx="1" fill="#fff" stroke="#6a6a6a" stroke-width="0.75"/></svg>
<svg width="9" height="9" style="left:487.6px;top:314.26px" viewBox="0 0 9 9"><rect x="1" y="1" width="7" height="7" rx="1" fill="#fff" stroke="#6a6a6a" stroke-width="0.75"/></svg>
<svg width="9" height="9" style="left:487.6px;top:324.94px" viewBox="0 0 9 9"><rect x="1" y="1" width="7" height="7" rx="1" fill="#fff" stroke="#6a6a6a" stroke-width="0.75"/></svg>
<div style="position:absolute;left:483.60px;top:327.20px;width:134.40px;height:1.00px;background:#f3f5f8;z-index:3;"></div>
<div style="position:absolute;left:483.00px;top:328.20px;width:137.00px;height:4.00px;background:#f4f6f8;z-index:3;"></div>
<div style="position:absolute;left:483.00px;top:332.20px;width:137.00px;height:12.40px;background:#dadada;z-index:3;"></div>
<div style="position:absolute;left:483.00px;top:328.20px;width:137.00px;height:0.60px;background:#d3d5d8;z-index:3;"></div>
<svg width="1030" height="557" style="left:0;top:0;z-index:1"><defs><clipPath id="cc"><rect x="637.8" y="80" width="388" height="220"/></clipPath></defs><line x1="637.8" y1="136.5" x2="1025.5" y2="136.5" stroke="#cfcfcf" stroke-width="1"/><line x1="637.8" y1="196.5" x2="1025.5" y2="196.5" stroke="#cfcfcf" stroke-width="1"/><line x1="637.8" y1="257.5" x2="1025.5" y2="257.5" stroke="#cfcfcf" stroke-width="1"/><line x1="635.5" y1="93.3" x2="635.5" y2="297.2" stroke="#555" stroke-width="1"/><line x1="633" y1="99.5" x2="635.5" y2="99.5" stroke="#555" stroke-width="1"/><line x1="633" y1="111.5" x2="635.5" y2="111.5" stroke="#555" stroke-width="1"/><line x1="633" y1="123.5" x2="635.5" y2="123.5" stroke="#555" stroke-width="1"/><line x1="631" y1="136.5" x2="635.5" y2="136.5" stroke="#555" stroke-width="1"/><line x1="633" y1="148.5" x2="635.5" y2="148.5" stroke="#555" stroke-width="1"/><line x1="633" y1="160.5" x2="635.5" y2="160.5" stroke="#555" stroke-width="1"/><line x1="633" y1="172.5" x2="635.5" y2="172.5" stroke="#555" stroke-width="1"/><line x1="633" y1="184.5" x2="635.5" y2="184.5" stroke="#555" stroke-width="1"/><line x1="631" y1="196.5" x2="635.5" y2="196.5" stroke="#555" stroke-width="1"/><line x1="633" y1="209.5" x2="635.5" y2="209.5" stroke="#555" stroke-width="1"/><line x1="633" y1="221.5" x2="635.5" y2="221.5" stroke="#555" stroke-width="1"/><line x1="633" y1="233.5" x2="635.5" y2="233.5" stroke="#555" stroke-width="1"/><line x1="633" y1="245.5" x2="635.5" y2="245.5" stroke="#555" stroke-width="1"/><line x1="631" y1="257.5" x2="635.5" y2="257.5" stroke="#555" stroke-width="1"/><line x1="633" y1="270.5" x2="635.5" y2="270.5" stroke="#555" stroke-width="1"/><line x1="633" y1="282.5" x2="635.5" y2="282.5" stroke="#555" stroke-width="1"/><line x1="633" y1="295.5" x2="635.5" y2="295.5" stroke="#555" stroke-width="1"/><line x1="640" y1="302.5" x2="1026" y2="302.5" stroke="#555" stroke-width="1"/><line x1="652.5" y1="302.5" x2="652.5" y2="304.5" stroke="#555" stroke-width="1"/><line x1="667.5" y1="302.5" x2="667.5" y2="306" stroke="#555" stroke-width="1"/><line x1="682.5" y1="302.5" x2="682.5" y2="304.5" stroke="#555" stroke-width="1"/><line x1="697.5" y1="302.5" x2="697.5" y2="304.5" stroke="#555" stroke-width="1"/><line x1="713.5" y1="302.5" x2="713.5" y2="304.5" stroke="#555" stroke-width="1"/><line x1="728.5" y1="302.5" x2="728.5" y2="304.5" stroke="#555" stroke-width="1"/><line x1="743.5" y1="302.5" x2="743.5" y2="306" stroke="#555" stroke-width="1"/><line x1="758.5" y1="302.5" x2="758.5" y2="304.5" stroke="#555" stroke-width="1"/><line x1="774.5" y1="302.5" x2="774.5" y2="304.5" stroke="#555" stroke-width="1"/><line x1="789.5" y1="302.5" x2="789.5" y2="304.5" stroke="#555" stroke-width="1"/><line x1="804.5" y1="302.5" x2="804.5" y2="304.5" stroke="#555" stroke-width="1"/><line x1="819.5" y1="302.5" x2="819.5" y2="306" stroke="#555" stroke-width="1"/><line x1="835.5" y1="302.5" x2="835.5" y2="304.5" stroke="#555" stroke-width="1"/><line x1="850.5" y1="302.5" x2="850.5" y2="304.5" stroke="#555" stroke-width="1"/><line x1="865.5" y1="302.5" x2="865.5" y2="304.5" stroke="#555" stroke-width="1"/><line x1="880.5" y1="302.5" x2="880.5" y2="304.5" stroke="#555" stroke-width="1"/><line x1="896.5" y1="302.5" x2="896.5" y2="306" stroke="#555" stroke-width="1"/><line x1="911.5" y1="302.5" x2="911.5" y2="304.5" stroke="#555" stroke-width="1"/><line x1="926.5" y1="302.5" x2="926.5" y2="304.5" stroke="#555" stroke-width="1"/><line x1="941.5" y1="302.5" x2="941.5" y2="304.5" stroke="#555" stroke-width="1"/><line x1="957.5" y1="302.5" x2="957.5" y2="304.5" stroke="#555" stroke-width="1"/><line x1="972.5" y1="302.5" x2="972.5" y2="306" stroke="#555" stroke-width="1"/><line x1="987.5" y1="302.5" x2="987.5" y2="304.5" stroke="#555" stroke-width="1"/><line x1="1002.5" y1="302.5" x2="1002.5" y2="304.5" stroke="#555" stroke-width="1"/><line x1="1018.5" y1="302.5" x2="1018.5" y2="304.5" stroke="#555" stroke-width="1"/><polyline points="637.8,176.6 651.7,185.2 667.0,174.3 682.3,181.8 697.1,177.9 712.5,172.3 727.7,211.8 742.8,156.1 758.0,147.6 773.4,200.4 788.8,199.4 804.1,139.7 818.9,187.1 834.1,140.3 849.4,155.1 864.6,149.6 879.8,142.1 894.8,193.1 910.0,153.2 925.4,196.0 940.3,163.8 955.5,167.4 970.9,160.5 986.2,184.2 1001.4,145.3 1016.4,203.3 1025.6,187.1" fill="none" stroke="#e8a020" stroke-width="1.15" stroke-linejoin="miter" stroke-miterlimit="3"/><polyline points="637.8,182.7 651.7,145.9 667.0,136.1 682.3,214.2 697.1,172.3 712.5,161.5 727.7,186.2 742.8,189.5 758.0,197.6 773.4,211.8 788.8,139.2 804.1,160.1 818.9,159.5 834.1,143.1 849.4,215.2 864.6,140.1 879.8,190.5 894.8,205.3 910.0,182.6 925.4,156.5 940.3,180.8 955.5,175.7 970.9,171.9 986.2,206.9 1001.4,201.0 1016.4,187.1 1025.6,169.4" fill="none" stroke="#6b90a6" stroke-width="1.15" stroke-linejoin="miter" stroke-miterlimit="3"/><rect x="766" y="80.1" width="4.2" height="4.1" fill="#e8a020"/><rect x="834.3" y="80.1" width="4.2" height="4.1" fill="#6b90a6"/></svg>
<div class="t" style="left:638.40px;top:308.20px;width:30px;text-align:right;font-size:7px;line-height:7px;color:#333;transform:rotate(-45deg) scaleX(0.86);transform-origin:100% 0">L1/S16</div>
<div class="t" style="left:714.65px;top:308.20px;width:30px;text-align:right;font-size:7px;line-height:7px;color:#333;transform:rotate(-45deg) scaleX(0.86);transform-origin:100% 0">L1/S21</div>
<div class="t" style="left:790.90px;top:308.20px;width:30px;text-align:right;font-size:7px;line-height:7px;color:#333;transform:rotate(-45deg) scaleX(0.86);transform-origin:100% 0">L1/S26</div>
<div class="t" style="left:867.15px;top:308.20px;width:30px;text-align:right;font-size:7px;line-height:7px;color:#333;transform:rotate(-45deg) scaleX(0.86);transform-origin:100% 0">L1/S31</div>
<div class="t" style="left:943.40px;top:308.20px;width:30px;text-align:right;font-size:7px;line-height:7px;color:#333;transform:rotate(-45deg) scaleX(0.86);transform-origin:100% 0">L1/S36</div>
<svg width="8" height="8" style="left:198.50px;top:334.80px" viewBox="-4 -4 8 8"><path d="M-1.9 -1.9 L1.9 1.9 M1.9 -1.9 L-1.9 1.9" stroke="#444" stroke-width="0.9" fill="none"/></svg>
<svg width="9" height="9" style="left:982.8px;top:334.3px" viewBox="-4.5 -4.5 9 9"><g fill="#222"><rect x="-0.75" y="-3.4" width="1.5" height="1.5" transform="rotate(0)"/><rect x="-0.75" y="-3.4" width="1.5" height="1.5" transform="rotate(45)"/><rect x="-0.75" y="-3.4" width="1.5" height="1.5" transform="rotate(90)"/><rect x="-0.75" y="-3.4" width="1.5" height="1.5" transform="rotate(135)"/><rect x="-0.75" y="-3.4" width="1.5" height="1.5" transform="rotate(180)"/><rect x="-0.75" y="-3.4" width="1.5" height="1.5" transform="rotate(225)"/><rect x="-0.75" y="-3.4" width="1.5" height="1.5" transform="rotate(270)"/><rect x="-0.75" y="-3.4" width="1.5" height="1.5" transform="rotate(315)"/><circle r="2.4"/></g><circle r="0.9" fill="#dadada"/></svg>
<svg width="8" height="6" style="left:995.2px;top:335.7px" viewBox="0 0 8 6"><path d="M1.6 1.6 H6.4 L4 4.4 Z" fill="#222"/></svg>
<svg width="8" height="8" style="left:1006.40px;top:334.70px" viewBox="0 0 8 8"><g fill="none" stroke="#222" stroke-width="0.75"><path d="M1.7 3.5 H5 V6.3 H1.7 Z"/><path d="M2.9 3.3 V1.8 H6.5 V5 H5.2"/></g><rect x="1.6" y="3.4" width="3.4" height="0.9" fill="#222"/><rect x="2.8" y="1.7" width="3.8" height="0.8" fill="#222"/></svg>
<svg width="8" height="8" style="left:1017.80px;top:334.70px" viewBox="-4 -4 8 8"><path d="M-2.2 -2.2 L2.2 2.2 M2.2 -2.2 L-2.2 2.2" stroke="#333" stroke-width="0.9" fill="none"/></svg>
<div style="position:absolute;left:137.60px;top:344.80px;width:884.20px;height:0.70px;background:#e6e6e6;"></div>
<div style="position:absolute;left:137.60px;top:345.50px;width:884.20px;height:25.80px;background:#dce8f2;"></div>
<div style="position:absolute;left:137.60px;top:371.00px;width:884.20px;height:1.00px;background:#d6d8da;"></div>
<div style="position:absolute;left:137.60px;top:372.00px;width:884.20px;height:16.00px;background:#ffffff;"></div>
<div style="position:absolute;left:137.60px;top:388.00px;width:884.20px;height:16.00px;background:#f4f8fb;"></div>
<div style="position:absolute;left:137.60px;top:404.00px;width:884.20px;height:16.00px;background:#ffffff;"></div>
<div style="position:absolute;left:137.60px;top:420.00px;width:884.20px;height:16.00px;background:#f4f8fb;"></div>
<div style="position:absolute;left:137.60px;top:436.00px;width:884.20px;height:16.00px;background:#ffffff;"></div>
<div style="position:absolute;left:137.60px;top:452.00px;width:884.20px;height:16.00px;background:#f4f8fb;"></div>
<div style="position:absolute;left:137.60px;top:468.00px;width:884.20px;height:16.00px;background:#ffffff;"></div>
<div style="position:absolute;left:137.60px;top:484.00px;width:884.20px;height:16.00px;background:#f4f8fb;"></div>
<div style="position:absolute;left:137.60px;top:500.00px;width:884.20px;height:16.00px;background:#ffffff;"></div>
<div style="position:absolute;left:137.60px;top:516.00px;width:884.20px;height:16.00px;background:#f4f8fb;"></div>
<div style="position:absolute;left:137.60px;top:532.00px;width:884.20px;height:16.00px;background:#ffffff;"></div>
<div style="position:absolute;left:137.60px;top:388.00px;width:884.20px;height:1.00px;background:#dcdde0;"></div>
<div style="position:absolute;left:137.60px;top:404.00px;width:884.20px;height:1.00px;background:#dcdde0;"></div>
<div style="position:absolute;left:137.60px;top:420.00px;width:884.20px;height:1.00px;background:#dcdde0;"></div>
<div style="position:absolute;left:137.60px;top:436.00px;width:884.20px;height:1.00px;background:#dcdde0;"></div>
<div style="position:absolute;left:137.60px;top:452.00px;width:884.20px;height:1.00px;background:#dcdde0;"></div>
<div style="position:absolute;left:137.60px;top:468.00px;width:884.20px;height:1.00px;background:#dcdde0;"></div>
<div style="position:absolute;left:137.60px;top:484.00px;width:884.20px;height:1.00px;background:#dcdde0;"></div>
<div style="position:absolute;left:137.60px;top:500.00px;width:884.20px;height:1.00px;background:#dcdde0;"></div>
<div style="position:absolute;left:137.60px;top:516.00px;width:884.20px;height:1.00px;background:#dcdde0;"></div>
<div style="position:absolute;left:137.60px;top:532.00px;width:884.20px;height:1.00px;background:#dcdde0;"></div>
<div style="position:absolute;left:137.60px;top:548.00px;width:884.20px;height:1.00px;background:#dcdde0;"></div>
<div style="position:absolute;left:137.60px;top:549.00px;width:890.40px;height:8.00px;background:#f3f4f6;"></div>
<div style="position:absolute;left:166.00px;top:345.50px;width:1.00px;height:203.50px;background:#d3d6d9;"></div>
<div style="position:absolute;left:195.00px;top:345.50px;width:1.00px;height:203.50px;background:#d3d6d9;"></div>
<div style="position:absolute;left:247.00px;top:345.50px;width:1.00px;height:203.50px;background:#d3d6d9;"></div>
<div style="position:absolute;left:298.00px;top:345.50px;width:1.00px;height:203.50px;background:#d3d6d9;"></div>
<div style="position:absolute;left:354.00px;top:345.50px;width:1.00px;height:203.50px;background:#d3d6d9;"></div>
<div style="position:absolute;left:410.00px;top:345.50px;width:1.00px;height:203.50px;background:#d3d6d9;"></div>
<div style="position:absolute;left:502.00px;top:345.50px;width:1.00px;height:203.50px;background:#d3d6d9;"></div>
<div style="position:absolute;left:593.00px;top:345.50px;width:1.00px;height:203.50px;background:#d3d6d9;"></div>
<div style="position:absolute;left:673.00px;top:345.50px;width:1.00px;height:203.50px;background:#d3d6d9;"></div>
<div style="position:absolute;left:753.00px;top:345.50px;width:1.00px;height:203.50px;background:#d3d6d9;"></div>
<div style="position:absolute;left:833.00px;top:345.50px;width:1.00px;height:203.50px;background:#d3d6d9;"></div>
<div style="position:absolute;left:913.00px;top:345.50px;width:1.00px;height:203.50px;background:#d3d6d9;"></div>
<div style="position:absolute;left:991.00px;top:345.50px;width:1.00px;height:203.50px;background:#d3d6d9;"></div>
<div style="position:absolute;left:1021.80px;top:344.80px;width:6.70px;height:212.20px;background:#ffffff;z-index:3;"></div>
<div style="position:absolute;left:1028.50px;top:330.00px;width:1.50px;height:227.00px;background:#f4f6f8;z-index:3;"></div>
<div style="position:absolute;left:1021.80px;top:346.30px;width:4.90px;height:42.10px;background:#8f9499;border-radius:2.4px;z-index:4;"></div>
<div style="position:absolute;left:137.30px;top:549.90px;width:203.00px;height:4.90px;background:#9aa1a6;border-radius:2.4px;z-index:4;"></div>
<div class="t" style="left:12.60px;top:3.00px;font-size:7.7px;line-height:7.7px;color:#1a1a1a;transform:scaleX(0.8208);">C-DDS Service Toolkit Main Application</div>
<div class="t" style="left:4.80px;top:15.00px;font-size:7.0px;line-height:7.0px;color:#222;transform:scaleX(0.8066);">File</div>
<div class="t" style="left:23.10px;top:15.00px;font-size:7.0px;line-height:7.0px;color:#222;transform:scaleX(0.9238);">View</div>
<div class="t" style="left:46.10px;top:15.00px;font-size:7.0px;line-height:7.0px;color:#222;transform:scaleX(0.9606);">Tools</div>
<div class="t" style="left:70.70px;top:15.00px;font-size:7.0px;line-height:7.0px;color:#222;transform:scaleX(0.9787);">Help</div>
<div class="t" style="left:119.90px;top:32.00px;font-size:11.9px;line-height:11.9px;color:#ffffff;font-weight:bold;transform:scaleX(0.9552);">IR2 - Horizontal</div>
<div class="t" style="left:119.90px;top:49.00px;font-size:6.7px;line-height:6.7px;color:#a3c8e2;transform:scaleX(0.9451);">C-DDS id</div>
<div class="t" style="left:219.60px;top:32.00px;font-size:11.9px;line-height:11.9px;color:#ffffff;font-weight:bold;transform:scaleX(0.9185);">Standby</div>
<div class="t" style="left:219.60px;top:49.00px;font-size:6.7px;line-height:6.7px;color:#a3c8e2;transform:scaleX(1.0734);">delivery state</div>
<div class="t" style="left:301.10px;top:32.00px;font-size:11.9px;line-height:11.9px;color:#ffffff;font-weight:bold;transform:scaleX(0.9568);">N/A</div>
<div class="t" style="left:301.10px;top:49.00px;font-size:6.7px;line-height:6.7px;color:#a3c8e2;transform:scaleX(1.0628);">delivery id</div>
<div class="t" style="left:410.40px;top:32.00px;font-size:11.9px;line-height:11.9px;color:#ffffff;font-weight:bold;transform:scaleX(0.9568);">Manual</div>
<div class="t" style="left:410.20px;top:49.00px;font-size:6.7px;line-height:6.7px;color:#a3c8e2;transform:scaleX(1.1115);">mode</div>
<div class="t" style="left:476.70px;top:32.00px;font-size:11.9px;line-height:11.9px;color:#ffffff;font-weight:bold;transform:scaleX(0.9678);">someId</div>
<div class="t" style="left:476.70px;top:49.00px;font-size:6.7px;line-height:6.7px;color:#a3c8e2;transform:scaleX(1.1254);">configuration</div>
<div class="t" style="left:606.70px;top:32.00px;font-size:11.9px;line-height:11.9px;color:#ffffff;font-weight:bold;transform:scaleX(0.8863);">9 INTERLOCKS</div>
<div class="t" style="left:606.70px;top:49.00px;font-size:6.7px;line-height:6.7px;color:#a3c8e2;transform:scaleX(1.0834);">system status</div>
<div class="t" style="left:736.50px;top:38.00px;font-size:11.4px;line-height:11.4px;color:#e8eef3;font-weight:bold;transform:scaleX(0.9374);">REPORT MODE</div>
<div class="t" style="left:862.80px;top:37.00px;font-size:12.6px;line-height:12.6px;color:#e2e8ec;font-weight:bold;transform:scaleX(1.0030);">Scan</div>
<div class="t" style="left:912.00px;top:37.00px;font-size:12.6px;line-height:12.6px;color:#e2e8ec;font-weight:bold;transform:scaleX(0.8782);">N</div>
<div class="t" style="left:923.30px;top:37.00px;font-size:12.6px;line-height:12.6px;color:#e2e8ec;font-weight:bold;transform:scaleX(0.8208);">E</div>
<div class="t" style="left:935.80px;top:32.00px;font-size:11.0px;line-height:11.0px;color:#ffffff;font-weight:bold;transform:scaleX(0.9972);">N/A</div>
<div class="t" style="left:935.40px;top:49.00px;font-size:6.7px;line-height:6.7px;color:#a3c8e2;transform:scaleX(1.0557);">Logged Out</div>
<div class="t" style="left:5.00px;top:69.00px;font-size:7.2px;line-height:7.2px;color:#9a9a9a;transform:scaleX(0.9927);">delivery</div>
<div class="t" style="left:5.00px;top:78.00px;font-size:9.4px;line-height:9.4px;color:#1f6fa0;font-weight:bold;transform:scaleX(0.9903);">N/A</div>
<div class="t" style="left:5.00px;top:95.00px;font-size:7.6px;line-height:7.6px;color:#262626;transform:scaleX(0.9158);">Layer</div>
<div class="t" style="left:109.60px;top:94.00px;font-size:10.2px;line-height:10.2px;color:#262626;transform:scaleX(0.7758);">10</div>
<div class="t" style="left:118.30px;top:96.00px;font-size:7.0px;line-height:7.0px;color:#262626;transform:scaleX(1.0889);">/10</div>
<div class="t" style="left:5.00px;top:111.00px;font-size:7.6px;line-height:7.6px;color:#262626;transform:scaleX(0.9472);">Spot</div>
<div class="t" style="left:109.60px;top:110.00px;font-size:10.2px;line-height:10.2px;color:#262626;transform:scaleX(0.7758);">50</div>
<div class="t" style="left:118.30px;top:112.00px;font-size:7.0px;line-height:7.0px;color:#262626;transform:scaleX(1.0889);">/50</div>
<div class="t" style="left:5.00px;top:135.00px;font-size:7.6px;line-height:7.6px;color:#262626;transform:scaleX(0.9793);">Monitor 1</div>
<div class="t" style="left:108.50px;top:133.00px;font-size:9.8px;line-height:9.8px;color:#262626;transform:scaleX(0.8140);">100%</div>
<div class="t" style="left:37.90px;top:154.00px;font-size:7.2px;line-height:7.2px;color:#9a9a9a;transform:scaleX(0.9454);">100000/100000 Gp</div>
<div class="t" style="left:5.00px;top:166.00px;font-size:7.6px;line-height:7.6px;color:#262626;transform:scaleX(0.9919);">Monitor 2</div>
<div class="t" style="left:108.50px;top:164.00px;font-size:9.8px;line-height:9.8px;color:#262626;transform:scaleX(0.8140);">100%</div>
<div class="t" style="left:37.90px;top:185.00px;font-size:7.2px;line-height:7.2px;color:#9a9a9a;transform:scaleX(0.9454);">100000/100000 Gp</div>
<div class="t" style="left:5.00px;top:198.00px;font-size:9.6px;line-height:9.6px;color:#2a78a8;font-weight:bold;transform:scaleX(0.9205);">INFO</div>
<div class="t" style="left:5.00px;top:214.00px;font-size:7.2px;line-height:7.2px;color:#9a9a9a;transform:scaleX(1.0112);">particle type</div>
<div class="t" style="left:5.00px;top:223.00px;font-size:7.2px;line-height:7.2px;color:#262626;transform:scaleX(0.9143);">PROTON</div>
<div class="t" style="left:5.00px;top:235.00px;font-size:7.2px;line-height:7.2px;color:#9a9a9a;transform:scaleX(1.0105);">gating</div>
<div class="t" style="left:5.00px;top:244.00px;font-size:7.2px;line-height:7.2px;color:#262626;transform:scaleX(0.8773);">DISABLED</div>
<div class="t" style="left:5.00px;top:255.00px;font-size:7.2px;line-height:7.2px;color:#9a9a9a;transform:scaleX(0.9959);">gantry angle</div>
<div class="t" style="left:5.00px;top:264.00px;font-size:7.2px;line-height:7.2px;color:#262626;transform:scaleX(0.9747);">36°</div>
<div class="t" style="left:5.00px;top:276.00px;font-size:7.2px;line-height:7.2px;color:#9a9a9a;transform:scaleX(1.0517);">state</div>
<div class="t" style="left:5.00px;top:284.00px;font-size:7.2px;line-height:7.2px;color:#262626;transform:scaleX(0.9642);">Finished</div>
<div class="t" style="left:5.00px;top:296.00px;font-size:7.2px;line-height:7.2px;color:#9a9a9a;transform:scaleX(0.9955);">delivery ID</div>
<div class="t" style="left:5.00px;top:304.00px;font-size:7.2px;line-height:7.2px;color:#262626;transform:scaleX(0.9339);">216899</div>
<div class="t" style="left:5.00px;top:316.00px;font-size:7.2px;line-height:7.2px;color:#9a9a9a;transform:scaleX(1.0301);">irradiation started</div>
<div class="t" style="left:5.00px;top:325.00px;font-size:7.2px;line-height:7.2px;color:#262626;transform:scaleX(0.9364);">29 jul. 2020 at 08:30</div>
<div class="t" style="left:5.00px;top:336.00px;font-size:7.2px;line-height:7.2px;color:#9a9a9a;transform:scaleX(1.0271);">irradiation ended</div>
<div class="t" style="left:5.00px;top:345.00px;font-size:7.2px;line-height:7.2px;color:#262626;transform:scaleX(1.0263);">N/A</div>
<div class="t" style="left:5.00px;top:358.00px;font-size:9.6px;line-height:9.6px;color:#2a78a8;font-weight:bold;transform:scaleX(0.8411);">LAYERS</div>
<div class="t" style="left:6.80px;top:377.00px;font-size:7.4px;line-height:7.4px;color:#1e1e1e;transform:scaleX(1.0342);-webkit-text-stroke:0.12px #1e1e1e;">Layer 1</div>
<div class="t" style="left:92.50px;top:377.00px;font-size:7.4px;line-height:7.4px;color:#1e1e1e;transform:scaleX(1.0296);-webkit-text-stroke:0.12px #1e1e1e;">150.0MeV</div>
<div class="t" style="left:6.80px;top:394.00px;font-size:7.4px;line-height:7.4px;color:#1e1e1e;transform:scaleX(1.0342);-webkit-text-stroke:0.12px #1e1e1e;">Layer 2</div>
<div class="t" style="left:92.50px;top:394.00px;font-size:7.4px;line-height:7.4px;color:#1e1e1e;transform:scaleX(1.0296);-webkit-text-stroke:0.12px #1e1e1e;">150.0MeV</div>
<div class="t" style="left:6.80px;top:411.00px;font-size:7.4px;line-height:7.4px;color:#1e1e1e;transform:scaleX(1.0342);-webkit-text-stroke:0.12px #1e1e1e;">Layer 3</div>
<div class="t" style="left:92.50px;top:411.00px;font-size:7.4px;line-height:7.4px;color:#1e1e1e;transform:scaleX(1.0296);-webkit-text-stroke:0.12px #1e1e1e;">150.0MeV</div>
<div class="t" style="left:6.80px;top:429.00px;font-size:7.4px;line-height:7.4px;color:#1e1e1e;transform:scaleX(1.0342);-webkit-text-stroke:0.12px #1e1e1e;">Layer 4</div>
<div class="t" style="left:92.50px;top:429.00px;font-size:7.4px;line-height:7.4px;color:#1e1e1e;transform:scaleX(1.0296);-webkit-text-stroke:0.12px #1e1e1e;">150.0MeV</div>
<div class="t" style="left:6.80px;top:446.00px;font-size:7.4px;line-height:7.4px;color:#1e1e1e;transform:scaleX(1.0342);-webkit-text-stroke:0.12px #1e1e1e;">Layer 5</div>
<div class="t" style="left:92.50px;top:446.00px;font-size:7.4px;line-height:7.4px;color:#1e1e1e;transform:scaleX(1.0296);-webkit-text-stroke:0.12px #1e1e1e;">150.0MeV</div>
<div class="t" style="left:6.80px;top:463.00px;font-size:7.4px;line-height:7.4px;color:#1e1e1e;transform:scaleX(1.0342);-webkit-text-stroke:0.12px #1e1e1e;">Layer 6</div>
<div class="t" style="left:92.50px;top:463.00px;font-size:7.4px;line-height:7.4px;color:#1e1e1e;transform:scaleX(1.0296);-webkit-text-stroke:0.12px #1e1e1e;">150.0MeV</div>
<div class="t" style="left:6.80px;top:480.00px;font-size:7.4px;line-height:7.4px;color:#1e1e1e;transform:scaleX(1.0342);-webkit-text-stroke:0.12px #1e1e1e;">Layer 7</div>
<div class="t" style="left:92.50px;top:480.00px;font-size:7.4px;line-height:7.4px;color:#1e1e1e;transform:scaleX(1.0296);-webkit-text-stroke:0.12px #1e1e1e;">150.0MeV</div>
<div class="t" style="left:6.80px;top:497.00px;font-size:7.4px;line-height:7.4px;color:#1e1e1e;transform:scaleX(1.0342);-webkit-text-stroke:0.12px #1e1e1e;">Layer 8</div>
<div class="t" style="left:92.50px;top:497.00px;font-size:7.4px;line-height:7.4px;color:#1e1e1e;transform:scaleX(1.0296);-webkit-text-stroke:0.12px #1e1e1e;">150.0MeV</div>
<div class="t" style="left:6.80px;top:514.00px;font-size:7.4px;line-height:7.4px;color:#1e1e1e;transform:scaleX(1.0342);-webkit-text-stroke:0.12px #1e1e1e;">Layer 9</div>
<div class="t" style="left:92.50px;top:514.00px;font-size:7.4px;line-height:7.4px;color:#1e1e1e;transform:scaleX(1.0296);-webkit-text-stroke:0.12px #1e1e1e;">150.0MeV</div>
<div class="t" style="left:6.80px;top:531.00px;font-size:7.4px;line-height:7.4px;color:#1e1e1e;transform:scaleX(1.0255);-webkit-text-stroke:0.12px #1e1e1e;">Layer 10</div>
<div class="t" style="left:92.50px;top:531.00px;font-size:7.4px;line-height:7.4px;color:#1e1e1e;transform:scaleX(1.0296);-webkit-text-stroke:0.12px #1e1e1e;">150.0MeV</div>
<div class="t" style="left:153.30px;top:66.00px;font-size:8.6px;line-height:8.6px;color:#2a2a2a;font-weight:bold;transform:scaleX(0.8937);">Spotmap Plot</div>
<div class="t" style="left:152.65px;top:76.00px;font-size:7.0px;line-height:7.0px;color:#333;transform:scaleX(0.9200);">150</div>
<div class="t" style="left:152.65px;top:131.00px;font-size:7.0px;line-height:7.0px;color:#333;transform:scaleX(0.9200);">100</div>
<div class="t" style="left:156.23px;top:186.00px;font-size:7.0px;line-height:7.0px;color:#333;transform:scaleX(0.9200);">50</div>
<div class="t" style="left:159.81px;top:241.00px;font-size:7.0px;line-height:7.0px;color:#333;transform:scaleX(0.9200);">0</div>
<div class="t" style="left:154.09px;top:296.00px;font-size:7.0px;line-height:7.0px;color:#333;transform:scaleX(0.9200);">-50</div>
<div class="t" style="left:170.54px;top:310.00px;font-size:7.0px;line-height:7.0px;color:#333;transform:scaleX(0.9200);">-40</div>
<div class="t" style="left:207.90px;top:310.00px;font-size:7.0px;line-height:7.0px;color:#333;transform:scaleX(0.9200);">-30</div>
<div class="t" style="left:245.26px;top:310.00px;font-size:7.0px;line-height:7.0px;color:#333;transform:scaleX(0.9200);">-20</div>
<div class="t" style="left:282.62px;top:310.00px;font-size:7.0px;line-height:7.0px;color:#333;transform:scaleX(0.9200);">-10</div>
<div class="t" style="left:322.84px;top:310.00px;font-size:7.0px;line-height:7.0px;color:#333;transform:scaleX(0.9200);">0</div>
<div class="t" style="left:358.41px;top:310.00px;font-size:7.0px;line-height:7.0px;color:#333;transform:scaleX(0.9200);">10</div>
<div class="t" style="left:395.77px;top:310.00px;font-size:7.0px;line-height:7.0px;color:#333;transform:scaleX(0.9200);">20</div>
<div class="t" style="left:433.13px;top:310.00px;font-size:7.0px;line-height:7.0px;color:#333;transform:scaleX(0.9200);">30</div>
<div class="t" style="left:470.49px;top:310.00px;font-size:7.0px;line-height:7.0px;color:#333;transform:scaleX(0.9200);">40</div>
<div class="t" style="left:321.33px;top:317.00px;font-size:9.8px;line-height:9.8px;color:#1a1a1a;font-weight:bold;">X</div>
<div class="t" style="left:499.60px;top:66.00px;font-size:8.6px;line-height:8.6px;color:#2a2a2a;font-weight:bold;transform:scaleX(0.8920);">Spots Data Pane</div>
<div class="t" style="left:488.50px;top:82.00px;font-size:9.6px;line-height:9.6px;color:#2f7bab;font-weight:bold;transform:scaleX(0.9908);">Particle Rate [Gp/s]</div>
<div class="t" style="left:498.90px;top:98.00px;font-size:7.0px;line-height:7.0px;color:#2a2a2a;transform:scaleX(0.9692);">Average Rate BM1</div>
<div class="t" style="left:498.90px;top:109.00px;font-size:7.0px;line-height:7.0px;color:#2a2a2a;transform:scaleX(0.9726);">Average Rate BM2</div>
<div class="t" style="left:498.90px;top:119.00px;font-size:7.0px;line-height:7.0px;color:#2a2a2a;transform:scaleX(1.0227);">Max Short Int Rate BM1</div>
<div class="t" style="left:498.90px;top:130.00px;font-size:7.0px;line-height:7.0px;color:#2a2a2a;transform:scaleX(1.0254);">Max Short Int Rate BM2</div>
<div class="t" style="left:498.90px;top:141.00px;font-size:7.0px;line-height:7.0px;color:#2a2a2a;transform:scaleX(1.0034);">Max Long Int Rate BM1</div>
<div class="t" style="left:498.90px;top:151.00px;font-size:7.0px;line-height:7.0px;color:#2a2a2a;transform:scaleX(1.0062);">Max Long Int Rate BM2</div>
<div class="t" style="left:488.50px;top:164.00px;font-size:9.6px;line-height:9.6px;color:#2f7bab;font-weight:bold;transform:scaleX(0.9806);">Counts &amp; Particles [Gp]</div>
<div class="t" style="left:498.90px;top:180.00px;font-size:7.0px;line-height:7.0px;color:#2a2a2a;transform:scaleX(0.9985);">Particles Planned</div>
<div class="t" style="left:498.90px;top:191.00px;font-size:7.0px;line-height:7.0px;color:#2a2a2a;transform:scaleX(1.0044);">Particles Average</div>
<div class="t" style="left:498.90px;top:201.00px;font-size:7.0px;line-height:7.0px;color:#2a2a2a;transform:scaleX(0.9910);">Particles BM1</div>
<div class="t" style="left:498.90px;top:212.00px;font-size:7.0px;line-height:7.0px;color:#2a2a2a;transform:scaleX(0.9957);">Particles BM2</div>
<div class="t" style="left:498.90px;top:223.00px;font-size:7.0px;line-height:7.0px;color:#2a2a2a;transform:scaleX(1.0119);">Cumulative Particles Average</div>
<div class="t" style="left:498.90px;top:234.00px;font-size:7.0px;line-height:7.0px;color:#2a2a2a;transform:scaleX(1.0057);">Cumulative Particles BM1</div>
<div class="t" style="left:498.90px;top:244.00px;font-size:7.0px;line-height:7.0px;color:#2a2a2a;transform:scaleX(1.0082);">Cumulative Particles BM2</div>
<div class="t" style="left:498.90px;top:255.00px;font-size:7.0px;line-height:7.0px;color:#2a2a2a;transform:scaleX(1.0224);">Measured Counts BM1</div>
<div class="t" style="left:498.90px;top:266.00px;font-size:7.0px;line-height:7.0px;color:#2a2a2a;transform:scaleX(1.0252);">Measured Counts BM2</div>
<div class="t" style="left:488.50px;top:278.00px;font-size:9.6px;line-height:9.6px;color:#2f7bab;font-weight:bold;transform:scaleX(0.9885);">Position &amp; Width [mm]</div>
<div class="t" style="left:498.90px;top:294.00px;font-size:7.0px;line-height:7.0px;color:#2a2a2a;transform:scaleX(0.9659);">Num Pos Meas BM1</div>
<div class="t" style="left:498.90px;top:305.00px;font-size:7.0px;line-height:7.0px;color:#2a2a2a;transform:scaleX(0.9690);">Num Pos Meas BM2</div>
<div class="t" style="left:498.90px;top:315.00px;font-size:7.0px;line-height:7.0px;color:#2a2a2a;transform:scaleX(0.9803);">Pos X Planned</div>
<div class="t" style="left:498.90px;top:326.00px;font-size:7.0px;line-height:7.0px;color:#2a2a2a;transform:scaleX(0.9856);">Pos Y Planned</div>
<div class="t" style="left:773.30px;top:79.00px;font-size:7.0px;line-height:7.0px;color:#444;transform:scaleX(0.9421);">Average Rate BM2</div>
<div class="t" style="left:842.00px;top:79.00px;font-size:7.0px;line-height:7.0px;color:#444;transform:scaleX(0.9235);">Average Rate BM1</div>
<div class="t" style="left:620.60px;top:133.00px;font-size:7.0px;line-height:7.0px;color:#444;transform:scaleX(0.9491);">70</div>
<div class="t" style="left:620.60px;top:193.00px;font-size:7.0px;line-height:7.0px;color:#444;transform:scaleX(0.9491);">65</div>
<div class="t" style="left:620.60px;top:254.00px;font-size:7.0px;line-height:7.0px;color:#444;transform:scaleX(0.9491);">60</div>
<div class="t" style="left:143.10px;top:335.00px;font-size:7.8px;line-height:7.8px;color:#2aa3d6;font-weight:bold;transform:scaleX(0.9802);">S</div>
<div class="t" style="left:153.30px;top:335.00px;font-size:8.6px;line-height:8.6px;color:#2a2a2a;font-weight:bold;transform:scaleX(0.8840);">Spots Table</div>
<div class="t" style="left:143.50px;top:355.00px;font-size:7.0px;line-height:7.0px;color:#222;transform:scaleX(0.9700);">Layer</div>
<div class="t" style="left:173.91px;top:355.00px;font-size:7.0px;line-height:7.0px;color:#222;transform:scaleX(0.9700);">Spot</div>
<div class="t" style="left:210.25px;top:355.00px;font-size:7.0px;line-height:7.0px;color:#222;transform:scaleX(0.9700);">Started</div>
<div class="t" style="left:262.88px;top:355.00px;font-size:7.0px;line-height:7.0px;color:#222;transform:scaleX(0.9700);">Ended</div>
<div class="t" style="left:304.09px;top:350.00px;font-size:7.0px;line-height:7.0px;color:#222;transform:scaleX(0.9700);">Pos X Planned</div>
<div class="t" style="left:319.00px;top:360.00px;font-size:7.0px;line-height:7.0px;color:#222;transform:scaleX(0.9700);">[mm]</div>
<div class="t" style="left:360.36px;top:350.00px;font-size:7.0px;line-height:7.0px;color:#222;transform:scaleX(0.9700);">Pos Y Planned</div>
<div class="t" style="left:375.15px;top:360.00px;font-size:7.0px;line-height:7.0px;color:#222;transform:scaleX(0.9700);">[mm]</div>
<div class="t" style="left:416.88px;top:350.00px;font-size:7.0px;line-height:7.0px;color:#222;transform:scaleX(0.9700);">Pos X Average (Isocenter)</div>
<div class="t" style="left:448.90px;top:360.00px;font-size:7.0px;line-height:7.0px;color:#222;transform:scaleX(0.9700);">[mm]</div>
<div class="t" style="left:508.26px;top:350.00px;font-size:7.0px;line-height:7.0px;color:#222;transform:scaleX(0.9700);">Pos Y Average (Isocenter)</div>
<div class="t" style="left:540.15px;top:360.00px;font-size:7.0px;line-height:7.0px;color:#222;transform:scaleX(0.9700);">[mm]</div>
<div class="t" style="left:599.15px;top:350.00px;font-size:7.0px;line-height:7.0px;color:#222;transform:scaleX(0.9700);">Pos X BM1 (Isocenter)</div>
<div class="t" style="left:625.75px;top:360.00px;font-size:7.0px;line-height:7.0px;color:#222;transform:scaleX(0.9700);">[mm]</div>
<div class="t" style="left:679.42px;top:350.00px;font-size:7.0px;line-height:7.0px;color:#222;transform:scaleX(0.9700);">Pos Y BM1 (Isocenter)</div>
<div class="t" style="left:705.90px;top:360.00px;font-size:7.0px;line-height:7.0px;color:#222;transform:scaleX(0.9700);">[mm]</div>
<div class="t" style="left:759.30px;top:350.00px;font-size:7.0px;line-height:7.0px;color:#222;transform:scaleX(0.9700);">Pos X BM2 (Isocenter)</div>
<div class="t" style="left:785.90px;top:360.00px;font-size:7.0px;line-height:7.0px;color:#222;transform:scaleX(0.9700);">[mm]</div>
<div class="t" style="left:839.47px;top:350.00px;font-size:7.0px;line-height:7.0px;color:#222;transform:scaleX(0.9700);">Pos Y BM2 (Isocenter)</div>
<div class="t" style="left:865.95px;top:360.00px;font-size:7.0px;line-height:7.0px;color:#222;transform:scaleX(0.9700);">[mm]</div>
<div class="t" style="left:919.73px;top:350.00px;font-size:7.0px;line-height:7.0px;color:#222;transform:scaleX(0.9700);">Pos X BM1 (Detector)</div>
<div class="t" style="left:945.20px;top:360.00px;font-size:7.0px;line-height:7.0px;color:#222;transform:scaleX(0.9700);">[mm]</div>
<div class="t" style="left:997.30px;top:350.00px;font-size:7.0px;line-height:7.0px;color:#222;transform:scaleX(0.9700);">Pos Y BM1 (Detector)</div>
<div class="t" style="left:150.17px;top:378.00px;font-size:6.8px;line-height:6.8px;color:#222;transform:scaleX(0.9700);">1</div>
<div class="t" style="left:179.07px;top:378.00px;font-size:6.8px;line-height:6.8px;color:#222;transform:scaleX(0.9700);">1</div>
<div class="t" style="left:201.03px;top:378.00px;font-size:6.8px;line-height:6.8px;color:#222;transform:scaleX(0.9700);">00:00.056628</div>
<div class="t" style="left:252.53px;top:378.00px;font-size:6.8px;line-height:6.8px;color:#222;transform:scaleX(0.9700);">00:03.541497</div>
<div class="t" style="left:317.20px;top:378.00px;font-size:6.8px;line-height:6.8px;color:#222;transform:scaleX(0.9700);">-300.0</div>
<div class="t" style="left:373.35px;top:378.00px;font-size:6.8px;line-height:6.8px;color:#222;transform:scaleX(0.9700);">-300.0</div>
<div class="t" style="left:447.10px;top:378.00px;font-size:6.8px;line-height:6.8px;color:#222;transform:scaleX(0.9700);">-300.9</div>
<div class="t" style="left:538.35px;top:378.00px;font-size:6.8px;line-height:6.8px;color:#222;transform:scaleX(0.9700);">-297.3</div>
<div class="t" style="left:623.95px;top:378.00px;font-size:6.8px;line-height:6.8px;color:#222;transform:scaleX(0.9700);">-296.7</div>
<div class="t" style="left:704.10px;top:378.00px;font-size:6.8px;line-height:6.8px;color:#222;transform:scaleX(0.9700);">-297.1</div>
<div class="t" style="left:784.10px;top:378.00px;font-size:6.8px;line-height:6.8px;color:#222;transform:scaleX(0.9700);">-305.1</div>
<div class="t" style="left:864.15px;top:378.00px;font-size:6.8px;line-height:6.8px;color:#222;transform:scaleX(0.9700);">-297.5</div>
<div class="t" style="left:943.40px;top:378.00px;font-size:6.8px;line-height:6.8px;color:#222;transform:scaleX(0.9700);">-296.9</div>
<div class="t" style="left:150.17px;top:394.00px;font-size:6.8px;line-height:6.8px;color:#222;transform:scaleX(0.9700);">1</div>
<div class="t" style="left:179.07px;top:394.00px;font-size:6.8px;line-height:6.8px;color:#222;transform:scaleX(0.9700);">2</div>
<div class="t" style="left:201.03px;top:394.00px;font-size:6.8px;line-height:6.8px;color:#222;transform:scaleX(0.9700);">00:03.598126</div>
<div class="t" style="left:252.53px;top:394.00px;font-size:6.8px;line-height:6.8px;color:#222;transform:scaleX(0.9700);">00:07.082995</div>
<div class="t" style="left:317.20px;top:394.00px;font-size:6.8px;line-height:6.8px;color:#222;transform:scaleX(0.9700);">-300.0</div>
<div class="t" style="left:373.35px;top:394.00px;font-size:6.8px;line-height:6.8px;color:#222;transform:scaleX(0.9700);">-265.0</div>
<div class="t" style="left:447.10px;top:394.00px;font-size:6.8px;line-height:6.8px;color:#222;transform:scaleX(0.9700);">-299.4</div>
<div class="t" style="left:538.35px;top:394.00px;font-size:6.8px;line-height:6.8px;color:#222;transform:scaleX(0.9700);">-269.9</div>
<div class="t" style="left:623.95px;top:394.00px;font-size:6.8px;line-height:6.8px;color:#222;transform:scaleX(0.9700);">-300.4</div>
<div class="t" style="left:704.10px;top:394.00px;font-size:6.8px;line-height:6.8px;color:#222;transform:scaleX(0.9700);">-271.7</div>
<div class="t" style="left:784.10px;top:394.00px;font-size:6.8px;line-height:6.8px;color:#222;transform:scaleX(0.9700);">-298.3</div>
<div class="t" style="left:864.15px;top:394.00px;font-size:6.8px;line-height:6.8px;color:#222;transform:scaleX(0.9700);">-268.0</div>
<div class="t" style="left:943.40px;top:394.00px;font-size:6.8px;line-height:6.8px;color:#222;transform:scaleX(0.9700);">-299.8</div>
<div class="t" style="left:150.17px;top:410.00px;font-size:6.8px;line-height:6.8px;color:#222;transform:scaleX(0.9700);">1</div>
<div class="t" style="left:179.07px;top:410.00px;font-size:6.8px;line-height:6.8px;color:#222;transform:scaleX(0.9700);">3</div>
<div class="t" style="left:201.03px;top:410.00px;font-size:6.8px;line-height:6.8px;color:#222;transform:scaleX(0.9700);">00:07.139624</div>
<div class="t" style="left:252.53px;top:410.00px;font-size:6.8px;line-height:6.8px;color:#222;transform:scaleX(0.9700);">00:10.624494</div>
<div class="t" style="left:317.20px;top:410.00px;font-size:6.8px;line-height:6.8px;color:#222;transform:scaleX(0.9700);">-300.0</div>
<div class="t" style="left:373.35px;top:410.00px;font-size:6.8px;line-height:6.8px;color:#222;transform:scaleX(0.9700);">-230.0</div>
<div class="t" style="left:447.10px;top:410.00px;font-size:6.8px;line-height:6.8px;color:#222;transform:scaleX(0.9700);">-300.5</div>
<div class="t" style="left:538.35px;top:410.00px;font-size:6.8px;line-height:6.8px;color:#222;transform:scaleX(0.9700);">-226.1</div>
<div class="t" style="left:623.95px;top:410.00px;font-size:6.8px;line-height:6.8px;color:#222;transform:scaleX(0.9700);">-308.9</div>
<div class="t" style="left:704.10px;top:410.00px;font-size:6.8px;line-height:6.8px;color:#222;transform:scaleX(0.9700);">-231.1</div>
<div class="t" style="left:784.10px;top:410.00px;font-size:6.8px;line-height:6.8px;color:#222;transform:scaleX(0.9700);">-292.1</div>
<div class="t" style="left:864.15px;top:410.00px;font-size:6.8px;line-height:6.8px;color:#222;transform:scaleX(0.9700);">-221.2</div>
<div class="t" style="left:943.40px;top:410.00px;font-size:6.8px;line-height:6.8px;color:#222;transform:scaleX(0.9700);">-308.0</div>
<div class="t" style="left:150.17px;top:426.00px;font-size:6.8px;line-height:6.8px;color:#222;transform:scaleX(0.9700);">1</div>
<div class="t" style="left:179.07px;top:426.00px;font-size:6.8px;line-height:6.8px;color:#222;transform:scaleX(0.9700);">4</div>
<div class="t" style="left:201.28px;top:426.00px;font-size:6.8px;line-height:6.8px;color:#222;transform:scaleX(0.9700);">00:10.681122</div>
<div class="t" style="left:252.53px;top:426.00px;font-size:6.8px;line-height:6.8px;color:#222;transform:scaleX(0.9700);">00:14.165991</div>
<div class="t" style="left:317.20px;top:426.00px;font-size:6.8px;line-height:6.8px;color:#222;transform:scaleX(0.9700);">-300.0</div>
<div class="t" style="left:373.35px;top:426.00px;font-size:6.8px;line-height:6.8px;color:#222;transform:scaleX(0.9700);">-195.0</div>
<div class="t" style="left:447.10px;top:426.00px;font-size:6.8px;line-height:6.8px;color:#222;transform:scaleX(0.9700);">-299.8</div>
<div class="t" style="left:538.35px;top:426.00px;font-size:6.8px;line-height:6.8px;color:#222;transform:scaleX(0.9700);">-186.6</div>
<div class="t" style="left:623.95px;top:426.00px;font-size:6.8px;line-height:6.8px;color:#222;transform:scaleX(0.9700);">-297.6</div>
<div class="t" style="left:704.10px;top:426.00px;font-size:6.8px;line-height:6.8px;color:#222;transform:scaleX(0.9700);">-187.3</div>
<div class="t" style="left:784.10px;top:426.00px;font-size:6.8px;line-height:6.8px;color:#222;transform:scaleX(0.9700);">-301.9</div>
<div class="t" style="left:864.15px;top:426.00px;font-size:6.8px;line-height:6.8px;color:#222;transform:scaleX(0.9700);">-185.9</div>
<div class="t" style="left:943.40px;top:426.00px;font-size:6.8px;line-height:6.8px;color:#222;transform:scaleX(0.9700);">-309.1</div>
<div class="t" style="left:150.17px;top:442.00px;font-size:6.8px;line-height:6.8px;color:#222;transform:scaleX(0.9700);">1</div>
<div class="t" style="left:179.07px;top:442.00px;font-size:6.8px;line-height:6.8px;color:#222;transform:scaleX(0.9700);">5</div>
<div class="t" style="left:201.03px;top:442.00px;font-size:6.8px;line-height:6.8px;color:#222;transform:scaleX(0.9700);">00:14.222619</div>
<div class="t" style="left:252.53px;top:442.00px;font-size:6.8px;line-height:6.8px;color:#222;transform:scaleX(0.9700);">00:17.707490</div>
<div class="t" style="left:317.20px;top:442.00px;font-size:6.8px;line-height:6.8px;color:#222;transform:scaleX(0.9700);">-300.0</div>
<div class="t" style="left:373.35px;top:442.00px;font-size:6.8px;line-height:6.8px;color:#222;transform:scaleX(0.9700);">-160.0</div>
<div class="t" style="left:447.10px;top:442.00px;font-size:6.8px;line-height:6.8px;color:#222;transform:scaleX(0.9700);">-304.7</div>
<div class="t" style="left:538.35px;top:442.00px;font-size:6.8px;line-height:6.8px;color:#222;transform:scaleX(0.9700);">-161.7</div>
<div class="t" style="left:623.95px;top:442.00px;font-size:6.8px;line-height:6.8px;color:#222;transform:scaleX(0.9700);">-305.7</div>
<div class="t" style="left:704.10px;top:442.00px;font-size:6.8px;line-height:6.8px;color:#222;transform:scaleX(0.9700);">-164.0</div>
<div class="t" style="left:784.10px;top:442.00px;font-size:6.8px;line-height:6.8px;color:#222;transform:scaleX(0.9700);">-303.7</div>
<div class="t" style="left:864.15px;top:442.00px;font-size:6.8px;line-height:6.8px;color:#222;transform:scaleX(0.9700);">-159.5</div>
<div class="t" style="left:943.40px;top:442.00px;font-size:6.8px;line-height:6.8px;color:#222;transform:scaleX(0.9700);">-294.5</div>
<div class="t" style="left:150.17px;top:458.00px;font-size:6.8px;line-height:6.8px;color:#222;transform:scaleX(0.9700);">1</div>
<div class="t" style="left:179.07px;top:458.00px;font-size:6.8px;line-height:6.8px;color:#222;transform:scaleX(0.9700);">6</div>
<div class="t" style="left:201.28px;top:458.00px;font-size:6.8px;line-height:6.8px;color:#222;transform:scaleX(0.9700);">00:17.764117</div>
<div class="t" style="left:252.53px;top:458.00px;font-size:6.8px;line-height:6.8px;color:#222;transform:scaleX(0.9700);">00:21.248988</div>
<div class="t" style="left:317.20px;top:458.00px;font-size:6.8px;line-height:6.8px;color:#222;transform:scaleX(0.9700);">-300.0</div>
<div class="t" style="left:373.35px;top:458.00px;font-size:6.8px;line-height:6.8px;color:#222;transform:scaleX(0.9700);">-125.0</div>
<div class="t" style="left:447.10px;top:458.00px;font-size:6.8px;line-height:6.8px;color:#222;transform:scaleX(0.9700);">-296.4</div>
<div class="t" style="left:538.35px;top:458.00px;font-size:6.8px;line-height:6.8px;color:#222;transform:scaleX(0.9700);">-125.7</div>
<div class="t" style="left:623.95px;top:458.00px;font-size:6.8px;line-height:6.8px;color:#222;transform:scaleX(0.9700);">-294.3</div>
<div class="t" style="left:704.10px;top:458.00px;font-size:6.8px;line-height:6.8px;color:#222;transform:scaleX(0.9700);">-134.4</div>
<div class="t" style="left:784.10px;top:458.00px;font-size:6.8px;line-height:6.8px;color:#222;transform:scaleX(0.9700);">-298.5</div>
<div class="t" style="left:864.39px;top:458.00px;font-size:6.8px;line-height:6.8px;color:#222;transform:scaleX(0.9700);">-117.0</div>
<div class="t" style="left:943.40px;top:458.00px;font-size:6.8px;line-height:6.8px;color:#222;transform:scaleX(0.9700);">-302.9</div>
<div class="t" style="left:150.17px;top:474.00px;font-size:6.8px;line-height:6.8px;color:#222;transform:scaleX(0.9700);">1</div>
<div class="t" style="left:179.07px;top:474.00px;font-size:6.8px;line-height:6.8px;color:#222;transform:scaleX(0.9700);">7</div>
<div class="t" style="left:201.03px;top:474.00px;font-size:6.8px;line-height:6.8px;color:#222;transform:scaleX(0.9700);">00:21.305616</div>
<div class="t" style="left:252.53px;top:474.00px;font-size:6.8px;line-height:6.8px;color:#222;transform:scaleX(0.9700);">00:24.790486</div>
<div class="t" style="left:317.20px;top:474.00px;font-size:6.8px;line-height:6.8px;color:#222;transform:scaleX(0.9700);">-300.0</div>
<div class="t" style="left:375.18px;top:474.00px;font-size:6.8px;line-height:6.8px;color:#222;transform:scaleX(0.9700);">-90.0</div>
<div class="t" style="left:447.10px;top:474.00px;font-size:6.8px;line-height:6.8px;color:#222;transform:scaleX(0.9700);">-299.4</div>
<div class="t" style="left:540.18px;top:474.00px;font-size:6.8px;line-height:6.8px;color:#222;transform:scaleX(0.9700);">-89.9</div>
<div class="t" style="left:623.95px;top:474.00px;font-size:6.8px;line-height:6.8px;color:#222;transform:scaleX(0.9700);">-294.3</div>
<div class="t" style="left:705.93px;top:474.00px;font-size:6.8px;line-height:6.8px;color:#222;transform:scaleX(0.9700);">-95.9</div>
<div class="t" style="left:784.10px;top:474.00px;font-size:6.8px;line-height:6.8px;color:#222;transform:scaleX(0.9700);">-304.5</div>
<div class="t" style="left:865.98px;top:474.00px;font-size:6.8px;line-height:6.8px;color:#222;transform:scaleX(0.9700);">-83.9</div>
<div class="t" style="left:943.40px;top:474.00px;font-size:6.8px;line-height:6.8px;color:#222;transform:scaleX(0.9700);">-305.0</div>
<div class="t" style="left:150.17px;top:490.00px;font-size:6.8px;line-height:6.8px;color:#222;transform:scaleX(0.9700);">1</div>
<div class="t" style="left:179.07px;top:490.00px;font-size:6.8px;line-height:6.8px;color:#222;transform:scaleX(0.9700);">8</div>
<div class="t" style="left:201.28px;top:490.00px;font-size:6.8px;line-height:6.8px;color:#222;transform:scaleX(0.9700);">00:24.847114</div>
<div class="t" style="left:252.53px;top:490.00px;font-size:6.8px;line-height:6.8px;color:#222;transform:scaleX(0.9700);">00:28.331983</div>
<div class="t" style="left:317.20px;top:490.00px;font-size:6.8px;line-height:6.8px;color:#222;transform:scaleX(0.9700);">-300.0</div>
<div class="t" style="left:375.18px;top:490.00px;font-size:6.8px;line-height:6.8px;color:#222;transform:scaleX(0.9700);">-55.0</div>
<div class="t" style="left:447.10px;top:490.00px;font-size:6.8px;line-height:6.8px;color:#222;transform:scaleX(0.9700);">-298.6</div>
<div class="t" style="left:540.18px;top:490.00px;font-size:6.8px;line-height:6.8px;color:#222;transform:scaleX(0.9700);">-53.6</div>
<div class="t" style="left:623.95px;top:490.00px;font-size:6.8px;line-height:6.8px;color:#222;transform:scaleX(0.9700);">-303.7</div>
<div class="t" style="left:705.93px;top:490.00px;font-size:6.8px;line-height:6.8px;color:#222;transform:scaleX(0.9700);">-58.9</div>
<div class="t" style="left:784.10px;top:490.00px;font-size:6.8px;line-height:6.8px;color:#222;transform:scaleX(0.9700);">-293.6</div>
<div class="t" style="left:865.98px;top:490.00px;font-size:6.8px;line-height:6.8px;color:#222;transform:scaleX(0.9700);">-48.2</div>
<div class="t" style="left:943.40px;top:490.00px;font-size:6.8px;line-height:6.8px;color:#222;transform:scaleX(0.9700);">-305.4</div>
<div class="t" style="left:150.17px;top:506.00px;font-size:6.8px;line-height:6.8px;color:#222;transform:scaleX(0.9700);">1</div>
<div class="t" style="left:179.07px;top:506.00px;font-size:6.8px;line-height:6.8px;color:#222;transform:scaleX(0.9700);">9</div>
<div class="t" style="left:201.28px;top:506.00px;font-size:6.8px;line-height:6.8px;color:#222;transform:scaleX(0.9700);">00:28.388611</div>
<div class="t" style="left:252.53px;top:506.00px;font-size:6.8px;line-height:6.8px;color:#222;transform:scaleX(0.9700);">00:31.873481</div>
<div class="t" style="left:317.20px;top:506.00px;font-size:6.8px;line-height:6.8px;color:#222;transform:scaleX(0.9700);">-300.0</div>
<div class="t" style="left:375.18px;top:506.00px;font-size:6.8px;line-height:6.8px;color:#222;transform:scaleX(0.9700);">-20.0</div>
<div class="t" style="left:447.10px;top:506.00px;font-size:6.8px;line-height:6.8px;color:#222;transform:scaleX(0.9700);">-298.7</div>
<div class="t" style="left:540.18px;top:506.00px;font-size:6.8px;line-height:6.8px;color:#222;transform:scaleX(0.9700);">-20.7</div>
<div class="t" style="left:623.95px;top:506.00px;font-size:6.8px;line-height:6.8px;color:#222;transform:scaleX(0.9700);">-296.9</div>
<div class="t" style="left:705.93px;top:506.00px;font-size:6.8px;line-height:6.8px;color:#222;transform:scaleX(0.9700);">-29.9</div>
<div class="t" style="left:784.10px;top:506.00px;font-size:6.8px;line-height:6.8px;color:#222;transform:scaleX(0.9700);">-300.4</div>
<div class="t" style="left:866.23px;top:506.00px;font-size:6.8px;line-height:6.8px;color:#222;transform:scaleX(0.9700);">-11.5</div>
<div class="t" style="left:943.40px;top:506.00px;font-size:6.8px;line-height:6.8px;color:#222;transform:scaleX(0.9700);">-300.5</div>
<div class="t" style="left:150.17px;top:522.00px;font-size:6.8px;line-height:6.8px;color:#222;transform:scaleX(0.9700);">1</div>
<div class="t" style="left:177.23px;top:522.00px;font-size:6.8px;line-height:6.8px;color:#222;transform:scaleX(0.9700);">10</div>
<div class="t" style="left:201.03px;top:522.00px;font-size:6.8px;line-height:6.8px;color:#222;transform:scaleX(0.9700);">00:31.930109</div>
<div class="t" style="left:252.53px;top:522.00px;font-size:6.8px;line-height:6.8px;color:#222;transform:scaleX(0.9700);">00:35.414979</div>
<div class="t" style="left:317.20px;top:522.00px;font-size:6.8px;line-height:6.8px;color:#222;transform:scaleX(0.9700);">-300.0</div>
<div class="t" style="left:376.28px;top:522.00px;font-size:6.8px;line-height:6.8px;color:#222;transform:scaleX(0.9700);">15.0</div>
<div class="t" style="left:447.10px;top:522.00px;font-size:6.8px;line-height:6.8px;color:#222;transform:scaleX(0.9700);">-308.3</div>
<div class="t" style="left:541.28px;top:522.00px;font-size:6.8px;line-height:6.8px;color:#222;transform:scaleX(0.9700);">14.3</div>
<div class="t" style="left:623.95px;top:522.00px;font-size:6.8px;line-height:6.8px;color:#222;transform:scaleX(0.9700);">-309.4</div>
<div class="t" style="left:708.87px;top:522.00px;font-size:6.8px;line-height:6.8px;color:#222;transform:scaleX(0.9700);">6.7</div>
<div class="t" style="left:784.10px;top:522.00px;font-size:6.8px;line-height:6.8px;color:#222;transform:scaleX(0.9700);">-307.2</div>
<div class="t" style="left:867.08px;top:522.00px;font-size:6.8px;line-height:6.8px;color:#222;transform:scaleX(0.9700);">22.0</div>
<div class="t" style="left:943.40px;top:522.00px;font-size:6.8px;line-height:6.8px;color:#222;transform:scaleX(0.9700);">-301.3</div>
<div class="t" style="left:150.17px;top:538.00px;font-size:6.8px;line-height:6.8px;color:#222;transform:scaleX(0.9700);">1</div>
<div class="t" style="left:177.47px;top:538.00px;font-size:6.8px;line-height:6.8px;color:#222;transform:scaleX(0.9700);">11</div>
<div class="t" style="left:201.03px;top:538.00px;font-size:6.8px;line-height:6.8px;color:#222;transform:scaleX(0.9700);">00:35.471608</div>
<div class="t" style="left:252.53px;top:538.00px;font-size:6.8px;line-height:6.8px;color:#222;transform:scaleX(0.9700);">00:38.956477</div>
<div class="t" style="left:317.20px;top:538.00px;font-size:6.8px;line-height:6.8px;color:#222;transform:scaleX(0.9700);">-300.0</div>
<div class="t" style="left:376.28px;top:538.00px;font-size:6.8px;line-height:6.8px;color:#222;transform:scaleX(0.9700);">50.0</div>
<div class="t" style="left:447.10px;top:538.00px;font-size:6.8px;line-height:6.8px;color:#222;transform:scaleX(0.9700);">-297.0</div>
<div class="t" style="left:541.28px;top:538.00px;font-size:6.8px;line-height:6.8px;color:#222;transform:scaleX(0.9700);">55.1</div>
<div class="t" style="left:623.95px;top:538.00px;font-size:6.8px;line-height:6.8px;color:#222;transform:scaleX(0.9700);">-297.8</div>
<div class="t" style="left:707.03px;top:538.00px;font-size:6.8px;line-height:6.8px;color:#222;transform:scaleX(0.9700);">53.6</div>
<div class="t" style="left:784.10px;top:538.00px;font-size:6.8px;line-height:6.8px;color:#222;transform:scaleX(0.9700);">-296.3</div>
<div class="t" style="left:867.08px;top:538.00px;font-size:6.8px;line-height:6.8px;color:#222;transform:scaleX(0.9700);">56.6</div>
<div class="t" style="left:943.40px;top:538.00px;font-size:6.8px;line-height:6.8px;color:#222;transform:scaleX(0.9700);">-300.1</div>
</body></html>
